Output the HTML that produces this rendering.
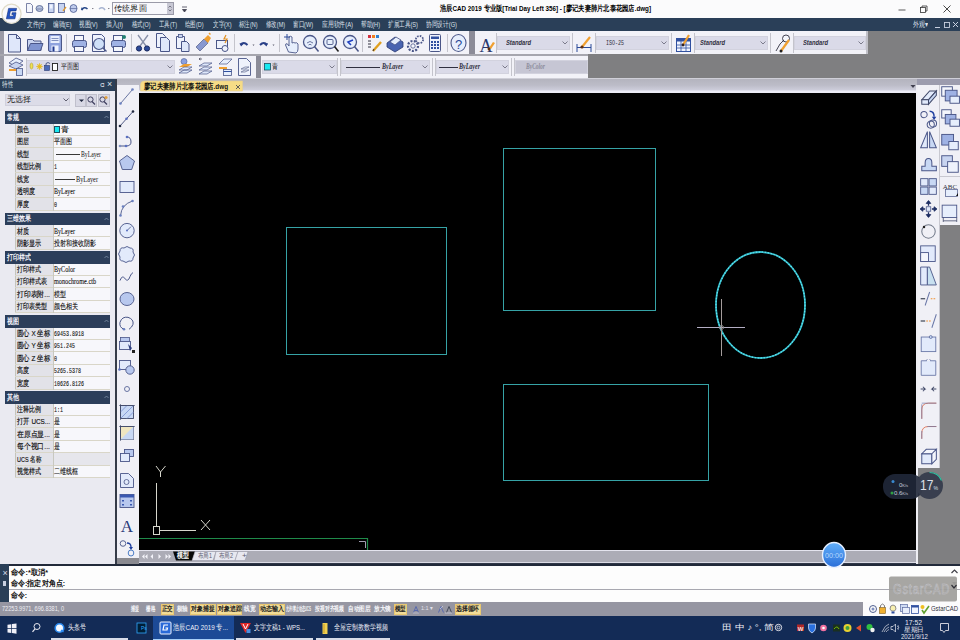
<!DOCTYPE html>
<html><head><meta charset="utf-8">
<style>
*{margin:0;padding:0;box-sizing:border-box}
html,body{width:960px;height:640px;overflow:hidden;background:#808080}
body{position:relative;font-family:"Liberation Sans",sans-serif;font-size:9px;color:#000}
.a{position:absolute}
.t{position:absolute;white-space:nowrap}
svg{position:absolute;overflow:visible}
.ln{display:inline-block;width:25px;height:1px;background:#333;vertical-align:3px;margin-right:1px}
</style><style id="fitcss">#doctab1{transform:scaleX(0.7908);transform-origin:0 0}#tabbar1{transform:scaleX(0.7500);transform-origin:0 0}#tabbar2{transform:scaleX(0.7818);transform-origin:0 0}#tabbar3{transform:scaleX(0.7818);transform-origin:0 0}#command1{transform:scaleX(0.9049);transform-origin:0 0}#command2{transform:scaleX(0.8805);transform-origin:0 0}#command3{transform:scaleX(0.8569);transform-origin:0 0}#status1{transform:scaleX(0.7963);transform-origin:0 0}#status2{transform:scaleX(0.5714);transform-origin:0 0}#status3{transform:scaleX(0.6429);transform-origin:0 0}#status4{transform:scaleX(0.7857);transform-origin:0 0}#status5{transform:scaleX(0.7857);transform-origin:0 0}#status6{transform:scaleX(0.8393);transform-origin:0 0}#status7{transform:scaleX(0.8500);transform-origin:0 0}#status8{transform:scaleX(0.8143);transform-origin:0 0}#status9{transform:scaleX(0.8571);transform-origin:0 0}#status10{transform:scaleX(0.4256);transform-origin:0 0}#status11{transform:scaleX(0.6905);transform-origin:0 0}#status12{transform:scaleX(0.8036);transform-origin:0 0}#status13{transform:scaleX(0.8095);transform-origin:0 0}#status14{transform:scaleX(0.7857);transform-origin:0 0}#status15{transform:scaleX(0.8321);transform-origin:0 0}#status16{transform:scaleX(0.9220);transform-origin:0 0}#status17{transform:scaleX(0.8462);transform-origin:0 0}#taskbar1{transform:scaleX(0.7500);transform-origin:0 0}#taskbar2{transform:scaleX(0.7878);transform-origin:0 0}#taskbar3{transform:scaleX(0.7450);transform-origin:0 0}#taskbar4{transform:scaleX(0.7500);transform-origin:0 0}#taskbar5{transform:scaleX(1.2290);transform-origin:0 0}#taskbar6{transform:scaleX(0.9697);transform-origin:0 0}#taskbar7{transform:scaleX(0.9524);transform-origin:0 0}#taskbar8{transform:scaleX(0.8666);transform-origin:0 0}#overlay1{transform:scaleX(0.8603);transform-origin:0 0}#overlay2{transform:scaleX(1.0267);transform-origin:0 0}#overlay3{transform:scaleX(0.7466);transform-origin:0 0}#panel1{transform:scaleX(0.6875);transform-origin:0 0}#panel2{transform:scaleX(0.7500);transform-origin:0 0}#panel3{transform:scaleX(0.7500);transform-origin:0 0}#panel4{transform:scaleX(0.7500);transform-origin:0 0}#panel5{transform:scaleX(0.7500);transform-origin:0 0}#panel6{transform:scaleX(0.7500);transform-origin:0 0}#panel7{transform:scaleX(0.7143);transform-origin:0 0}#panel8{transform:scaleX(0.7500);transform-origin:0 0}#panel9{transform:scaleX(0.6234);transform-origin:0 0}#panel10{transform:scaleX(0.7500);transform-origin:0 0}#panel11{transform:scaleX(0.7857);transform-origin:0 0}#panel12{transform:scaleX(0.7500);transform-origin:0 0}#panel13{transform:scaleX(0.7500);transform-origin:0 0}#panel14{transform:scaleX(0.7500);transform-origin:0 0}#panel15{transform:scaleX(0.6234);transform-origin:0 0}#panel16{transform:scaleX(0.7500);transform-origin:0 0}#panel17{transform:scaleX(0.7500);transform-origin:0 0}#panel18{transform:scaleX(0.7500);transform-origin:0 0}#panel19{transform:scaleX(0.7500);transform-origin:0 0}#panel20{transform:scaleX(0.7500);transform-origin:0 0}#panel21{transform:scaleX(0.7500);transform-origin:0 0}#panel22{transform:scaleX(0.7500);transform-origin:0 0}#panel23{transform:scaleX(0.7619);transform-origin:0 0}#panel24{transform:scaleX(0.7500);transform-origin:0 0}#panel25{transform:scaleX(0.7780);transform-origin:0 0}#panel26{transform:scaleX(0.8533);transform-origin:0 0}#panel27{transform:scaleX(0.7500);transform-origin:0 0}#panel28{transform:scaleX(0.7500);transform-origin:0 0}#panel29{transform:scaleX(0.7500);transform-origin:0 0}#panel30{transform:scaleX(0.7500);transform-origin:0 0}#panel31{transform:scaleX(0.7898);transform-origin:0 0}#panel32{transform:scaleX(0.6248);transform-origin:0 0}#panel33{transform:scaleX(0.7925);transform-origin:0 0}#panel34{transform:scaleX(0.6248);transform-origin:0 0}#panel35{transform:scaleX(0.7982);transform-origin:0 0}#panel36{transform:scaleX(0.6234);transform-origin:0 0}#panel37{transform:scaleX(0.7500);transform-origin:0 0}#panel38{transform:scaleX(0.6247);transform-origin:0 0}#panel39{transform:scaleX(0.7500);transform-origin:0 0}#panel40{transform:scaleX(0.6248);transform-origin:0 0}#panel41{transform:scaleX(0.7500);transform-origin:0 0}#panel42{transform:scaleX(0.7500);transform-origin:0 0}#panel43{transform:scaleX(0.6247);transform-origin:0 0}#panel44{transform:scaleX(0.7898);transform-origin:0 0}#panel45{transform:scaleX(0.7500);transform-origin:0 0}#panel46{transform:scaleX(0.8533);transform-origin:0 0}#panel47{transform:scaleX(0.7500);transform-origin:0 0}#panel48{transform:scaleX(0.8533);transform-origin:0 0}#panel49{transform:scaleX(0.7500);transform-origin:0 0}#panel50{transform:scaleX(0.6833);transform-origin:0 0}#panel52{transform:scaleX(0.7500);transform-origin:0 0}#panel53{transform:scaleX(0.7500);transform-origin:0 0}#toolbar11{transform:scaleX(0.7210);transform-origin:0 0}#toolbar12{transform:scaleX(0.6247);transform-origin:0 0}#toolbar13{transform:scaleX(0.7210);transform-origin:0 0}#toolbar14{transform:scaleX(0.7210);transform-origin:0 0}#toolbar21{transform:scaleX(0.7500);transform-origin:0 0}#toolbar22{transform:scaleX(0.7500);transform-origin:0 0}#toolbar23{transform:scaleX(0.7500);transform-origin:0 0}#toolbar24{transform:scaleX(0.7500);transform-origin:0 0}#toolbar25{transform:scaleX(0.6893);transform-origin:0 0}#title1{transform:scaleX(1.0312);transform-origin:0 0}#title2{transform:scaleX(0.7833);transform-origin:0 0}#menu1{transform:scaleX(0.7056);transform-origin:0 0}#menu2{transform:scaleX(0.6936);transform-origin:0 0}#menu3{transform:scaleX(0.6936);transform-origin:0 0}#menu4{transform:scaleX(0.7215);transform-origin:0 0}#menu5{transform:scaleX(0.6712);transform-origin:0 0}#menu6{transform:scaleX(0.6865);transform-origin:0 0}#menu7{transform:scaleX(0.6824);transform-origin:0 0}#menu8{transform:scaleX(0.6936);transform-origin:0 0}#menu9{transform:scaleX(0.6824);transform-origin:0 0}#menu10{transform:scaleX(0.6786);transform-origin:0 0}#menu11{transform:scaleX(0.6923);transform-origin:0 0}#menu12{transform:scaleX(0.7265);transform-origin:0 0}#menu13{transform:scaleX(0.7009);transform-origin:0 0}#menu14{transform:scaleX(0.7030);transform-origin:0 0}#menu15{transform:scaleX(0.7116);transform-origin:0 0}#menu16{transform:scaleX(0.7500);transform-origin:0 0}</style></head>
<body>
<div class="a" style="left:0px;top:0px;width:960px;height:18px;background:#fbfbfc;"></div>
<svg class="a" style="left:0;top:0" width="200" height="18" viewBox="0 0 200 18">
<path d="M26.5 3.5 h4 l2 2 v7 h-6z" fill="#f4f6fc" stroke="#5a6490" stroke-width="0.8"/>
<ellipse cx="39.5" cy="8.5" rx="3.5" ry="3" fill="#b8c4e0" stroke="#50608a" stroke-width="0.8"/><path d="M36.5 9 h6" stroke="#50608a" stroke-width="0.6"/>
<rect x="48.5" y="3.5" width="5.5" height="9" fill="#c8d4f0" stroke="#4a5a90" stroke-width="0.8"/><rect x="50" y="4.5" width="2.5" height="4" fill="#f0f4ff"/>
<rect x="58.5" y="3.5" width="6" height="9" fill="#c8d4f0" stroke="#4a5a90" stroke-width="0.8"/><path d="M63 11 l3 -4" stroke="#e09a30" stroke-width="1.3"/>
<ellipse cx="73.5" cy="8.5" rx="3.5" ry="4" fill="#c0ccec" stroke="#4a5a90" stroke-width="0.8"/><path d="M70 8.5 h7" stroke="#4a5a90" stroke-width="0.6"/>
<path d="M81.5 10 q2.5 -4 6 -1" fill="none" stroke="#2a4a8a" stroke-width="1.6"/><path d="M81 7.5 l1 3 l2 -2z" fill="#2a4a8a"/>
<path d="M92 8 h1.6 l-0.8 1.2z" fill="#505060"/>
<path d="M105 10 q-2.5 -4 -6 -1" fill="none" stroke="#a8b4d0" stroke-width="1.6"/>
<path d="M108 8 h1.6 l-0.8 1.2z" fill="#505060"/>
</svg>
<div class="a" style="left:112px;top:2px;width:62px;height:13px;background:#f8f8fc;border:1px solid #9a9aa8"></div>
<div class="t" id="title1" style="left:114px;top:3.5px;font-size:8px;line-height:10px;color:#101010;">传统界面</div>
<div class="a" style="left:167px;top:3px;width:6px;height:11px;background:#c8c8d4;"></div>
<svg class="a" style="left:167px;top:3px" width="6" height="11"><path d="M1.5 4.5 l1.5 -1.5 l1.5 1.5 M1.5 6.5 l1.5 1.5 l1.5 -1.5" fill="none" stroke="#606070" stroke-width="0.8"/></svg>
<svg class="a" style="left:181px;top:6px" width="8" height="8"><path d="M1 1 h5 M1.5 3.5 l2 2.5 l2 -2.5z" fill="#404050" stroke="#404050" stroke-width="0.8"/></svg>
<div class="t" id="title2" style="left:440px;top:4px;font-size:8px;line-height:10px;color:#000;"><b>浩辰CAD 2019 专业版[Trial Day Left 356] - [廖记夫妻肺片北泰花园店.dwg]</b></div>
<svg class="a" style="left:895px;top:2px" width="65" height="14">
<line x1="3.5" y1="8" x2="10.5" y2="8" stroke="#333" stroke-width="0.8"/>
<rect x="25.5" y="5.5" width="5" height="5" fill="none" stroke="#333" stroke-width="0.8"/><path d="M27 5.5 v-1.5 h5 v5 h-1.5" fill="none" stroke="#333" stroke-width="0.8"/>
<path d="M48.5 3.5 l7 7 M55.5 3.5 l-7 7" stroke="#333" stroke-width="0.9"/>
</svg>
<div class="a" style="left:0px;top:18px;width:960px;height:13px;background:#2a3f58;"></div>
<div class="t" id="menu1" style="left:26.7px;top:19.5px;font-size:8px;line-height:10px;color:#dde0ea;">文件(F)</div>
<div class="t" id="menu2" style="left:52.5px;top:19.5px;font-size:8px;line-height:10px;color:#dde0ea;">编辑(E)</div>
<div class="t" id="menu3" style="left:79px;top:19.5px;font-size:8px;line-height:10px;color:#dde0ea;">视图(V)</div>
<div class="t" id="menu4" style="left:106px;top:19.5px;font-size:8px;line-height:10px;color:#dde0ea;">插入(I)</div>
<div class="t" id="menu5" style="left:131.7px;top:19.5px;font-size:8px;line-height:10px;color:#dde0ea;">格式(O)</div>
<div class="t" id="menu6" style="left:159px;top:19.5px;font-size:8px;line-height:10px;color:#dde0ea;">工具(T)</div>
<div class="t" id="menu7" style="left:185px;top:19.5px;font-size:8px;line-height:10px;color:#dde0ea;">绘图(D)</div>
<div class="t" id="menu8" style="left:212.5px;top:19.5px;font-size:8px;line-height:10px;color:#dde0ea;">文字(X)</div>
<div class="t" id="menu9" style="left:239px;top:19.5px;font-size:8px;line-height:10px;color:#dde0ea;">标注(N)</div>
<div class="t" id="menu10" style="left:266px;top:19.5px;font-size:8px;line-height:10px;color:#dde0ea;">修改(M)</div>
<div class="t" id="menu11" style="left:293px;top:19.5px;font-size:8px;line-height:10px;color:#dde0ea;">窗口(W)</div>
<div class="t" id="menu12" style="left:321.7px;top:19.5px;font-size:8px;line-height:10px;color:#dde0ea;">应用软件(A)</div>
<div class="t" id="menu13" style="left:360.7px;top:19.5px;font-size:8px;line-height:10px;color:#dde0ea;">帮助(H)</div>
<div class="t" id="menu14" style="left:388px;top:19.5px;font-size:8px;line-height:10px;color:#dde0ea;">扩展工具(S)</div>
<div class="t" id="menu15" style="left:426px;top:19.5px;font-size:8px;line-height:10px;color:#dde0ea;">协同设计(G)</div>
<div class="t" id="menu16" style="left:913px;top:19.5px;font-size:8px;line-height:10px;color:#dde0ea;">外观▾</div>
<svg class="a" style="left:930px;top:19px" width="30" height="12">
<line x1="5" y1="8.5" x2="10" y2="8.5" stroke="#c8d0e0" stroke-width="1"/>
<rect x="14.5" y="3.5" width="5" height="5" fill="none" stroke="#c8d0e0" stroke-width="0.9"/>
<path d="M23 3 l5 5 M28 3 l-5 5" stroke="#c8d0e0" stroke-width="1"/>
</svg>
<svg class="a" style="left:0;top:0" width="30" height="30" viewBox="0 0 30 30">
<circle cx="11.5" cy="13.8" r="9.6" fill="#f8f8fc" stroke="#e0dcc8" stroke-width="1.2"/>
<path d="M8.6 8.4 H16.6 L16 10.9 H10.4 L9.3 16.2 H13.2 L13.6 14.5 H11.8 L12.2 12.7 H16 L14.9 18.8 H6.4 Z" fill="#2456c8" stroke="#0e2a78" stroke-width="0.6" stroke-linejoin="round"/>
</svg>
<div class="a" style="left:0px;top:31px;width:868px;height:23px;background:#f2f2f8;"></div>
<div class="a" style="left:868px;top:31px;width:92px;height:47px;background:#7f7f81;"></div>
<div class="a" style="left:0px;top:54px;width:868px;height:2px;background:#a6a6ae;"></div>
<div class="a" style="left:0px;top:56px;width:588px;height:22px;background:#f2f2f8;"></div>
<div class="a" style="left:588px;top:54px;width:280px;height:24px;background:#7f7f81;"></div>
<div class="a" style="left:0px;top:78px;width:960px;height:1px;background:#cfcfd8;"></div>
<div class="a" style="left:0px;top:31px;width:4px;height:23px;background:#9a9aa6;"></div>
<svg class="a" style="left:0px;top:0px;" width="960" height="80" viewBox="0 0 960 80">
<!-- new -->
<path d="M8.5 34.5 h8 l4 4 v13.5 h-12z" fill="#dfe7fa" stroke="#4a5688" stroke-width="1"/><path d="M16.5 34.5 v4 h4" fill="none" stroke="#4a5688" stroke-width="1"/>
<!-- open -->
<path d="M27.5 39.5 h5 l1.5 1.5 h7 v9.5 h-13.5z" fill="#c9d4f0" stroke="#4a5688" stroke-width="1"/><path d="M27.5 50.5 l3 -7 h12.5 l-2.5 7z" fill="#7f94d0" stroke="#4a5688" stroke-width="1"/>
<!-- save -->
<rect x="48.5" y="34.5" width="13" height="17" rx="1.5" fill="#8fa3de" stroke="#4a5688" stroke-width="1"/><rect x="50.5" y="36" width="9" height="7" fill="#e8eefc"/><line x1="51.5" y1="38.5" x2="58.5" y2="38.5" stroke="#8090c0"/><line x1="51.5" y1="40.5" x2="58.5" y2="40.5" stroke="#8090c0"/><rect x="51.5" y="45.5" width="7" height="6" fill="#f0f4ff"/><rect x="52.5" y="46.5" width="2" height="5" fill="#203a90"/>
<!-- print -->
<rect x="74.5" y="35.5" width="9" height="5" fill="#f4f6fc" stroke="#4a5688"/><rect x="72.5" y="40.5" width="14" height="7" rx="2" fill="#9fb2e4" stroke="#4a5688"/><rect x="74.5" y="46.5" width="9" height="5" fill="#f4f6fc" stroke="#4a5688"/>
<!-- preview -->
<path d="M92.5 34.5 h9 l3 3 v14 h-12z" fill="#eef2fc" stroke="#4a5688"/><circle cx="99" cy="44" r="5.5" fill="#cfe0f8" stroke="#4a5688" stroke-width="1.2"/><line x1="103" y1="48" x2="106.5" y2="51.5" stroke="#4a5688" stroke-width="1.4"/>
<!-- plot -->
<rect x="113.5" y="35.5" width="9" height="5" fill="#f4f6fc" stroke="#4a5688"/><rect x="111.5" y="40.5" width="14" height="7" rx="2" fill="#9fb2e4" stroke="#4a5688"/><rect x="113.5" y="46.5" width="9" height="5" fill="#f4f6fc" stroke="#4a5688"/><circle cx="124" cy="37" r="2" fill="#208070"/>
<!-- cut -->
<path d="M138 35 l8 11 M148 35 l-8 11" stroke="#8890a8" stroke-width="1.3"/><circle cx="139" cy="48.5" r="2.6" fill="#2c4a98" stroke="#1a2a60"/><circle cx="147" cy="48.5" r="2.6" fill="#2c4a98" stroke="#1a2a60"/>
<!-- copy -->
<path d="M156.5 33.5 h6 l3 3 v11 h-9z" fill="#eef2fc" stroke="#4a5688"/><path d="M160.5 37.5 h6 l3 3 v11 h-9z" fill="#dfe8fa" stroke="#4a5688"/>
<!-- paste -->
<path d="M176.5 36.5 h8 v12 h-8z" fill="#eef2fc" stroke="#4a5688"/><rect x="178.5" y="34.5" width="4" height="3" fill="#c8d4f0" stroke="#4a5688" stroke-width="0.8"/><path d="M181.5 41.5 h5 l2.5 2.5 v7.5 h-7.5z" fill="#dfe8fa" stroke="#4a5688"/>
<!-- matchprop -->
<path d="M196 47 l8 -8 l4 4 l-8 8z" fill="#8898d0" stroke="#606a90" stroke-width="0.8"/><path d="M204 39 l4 -4 l3 3 l-3 5z" fill="#f0a030"/><path d="M209 33 l1.5 1.5" stroke="#f0a030" stroke-width="1.5"/>
<!-- block -->
<rect x="216.5" y="40.5" width="11" height="8" fill="#eef2fc" stroke="#4a5688"/><circle cx="225" cy="48.5" r="3" fill="#eef2fc" stroke="#4a5688"/><path d="M226 35 l-2 4 h3 l-2 4" fill="none" stroke="#e09020" stroke-width="1.2"/>
<!-- undo/redo -->
<path d="M240.5 45 q3 -4 7 0" fill="none" stroke="#2a4088" stroke-width="2"/><path d="M239.5 43 l1.5 3.5 l2.5 -2.5z" fill="#2a4088"/><path d="M252.5 44.5 h2 l-1 1.5z" fill="#606070"/>
<path d="M267 45 q-3 -4 -7 0" fill="none" stroke="#2a4088" stroke-width="2"/><path d="M268 43 l-1.5 3.5 l-2.5 -2.5z" fill="#2a4088"/><path d="M272.5 44.5 h2 l-1 1.5z" fill="#606070"/>
<!-- pan hand -->
<path d="M288.5 52 l-3 -7 q0 -2 2 -1 l1.5 2 v-9 q1.5 -1.5 3 0 v6 q2 -1 3 0 q2 -1 3 1 v5 q0 3 -2 4z" fill="#e6eefc" stroke="#4a5688" stroke-width="0.9"/><path d="M284 37 h6 M287 34 v6" stroke="#2c4a98" stroke-width="1"/>
<!-- zoom realtime -->
<circle cx="310" cy="42" r="6.5" fill="#e6eefc" stroke="#4a5688" stroke-width="1.3"/><path d="M307 43 q3 -3 6 0 M308.5 45 q1.5 -1.5 3 0" fill="none" stroke="#4a5688" stroke-width="0.8"/><line x1="314.5" y1="46.5" x2="318.5" y2="51.5" stroke="#4a5688" stroke-width="1.5"/>
<!-- zoom window -->
<circle cx="330" cy="42" r="6.5" fill="#e6eefc" stroke="#4a5688" stroke-width="1.3"/><rect x="327" y="39.5" width="6" height="5" rx="1" fill="none" stroke="#4a5688" stroke-width="0.9"/><line x1="334.5" y1="46.5" x2="338.5" y2="51.5" stroke="#202020" stroke-width="1.6"/>
<!-- zoom prev -->
<circle cx="350" cy="42" r="6.5" fill="#e6eefc" stroke="#4a5688" stroke-width="1.3"/><path d="M353 40 l-5 2 l3 3" fill="none" stroke="#2040c0" stroke-width="1.6"/><line x1="354.5" y1="46.5" x2="358.5" y2="51.5" stroke="#4a5688" stroke-width="1.5"/>
<!-- properties -->
<rect x="368" y="35" width="3" height="3" fill="#d03040"/><rect x="372" y="35" width="3" height="3" fill="#f08020"/><rect x="376" y="35" width="3" height="3" fill="#3080d0"/>
<path d="M368 41 h3 M368 44 h3 M368 47 h3" stroke="#303040" stroke-width="1"/><path d="M373 51 l8 -9" stroke="#e0a020" stroke-width="2.4"/><path d="M373 51 l1 -2" stroke="#303040" stroke-width="1"/>
<!-- design center -->
<path d="M387 43 l8 -6 l8 5 v5 l-8 5 l-8 -5z" fill="#4a64b0" stroke="#2a3a70" stroke-width="0.8"/><path d="M390 42 l6 -5 l5 3 l-6 5z" fill="#e6eefc" stroke="#4a5688" stroke-width="0.8"/>
<!-- gear -->
<circle cx="413" cy="46" r="5" fill="none" stroke="#4a5688" stroke-width="2.2" stroke-dasharray="2 1.4"/><circle cx="413" cy="46" r="2.2" fill="#f4f6fc" stroke="#4a5688" stroke-width="0.8"/><circle cx="419.5" cy="39.5" r="3.6" fill="none" stroke="#4a5688" stroke-width="1.8" stroke-dasharray="1.6 1.2"/>
<!-- calc -->
<rect x="429.5" y="34.5" width="11" height="17" rx="1" fill="#eef2fc" stroke="#4a5688"/><rect x="431" y="36.5" width="8" height="2.5" fill="#3050a0"/>
<g fill="#3050a0"><rect x="431" y="41" width="2" height="2"/><rect x="434" y="41" width="2" height="2"/><rect x="437" y="41" width="2" height="2"/><rect x="431" y="44" width="2" height="2"/><rect x="434" y="44" width="2" height="2"/><rect x="437" y="44" width="2" height="2"/><rect x="431" y="47" width="2" height="2"/><rect x="434" y="47" width="2" height="2"/><rect x="437" y="47" width="2" height="2"/></g>
<!-- help -->
<ellipse cx="458.5" cy="43" rx="7.5" ry="8.5" fill="#e6eefc" stroke="#4a5688" stroke-width="1.1"/><text x="458.5" y="48.5" text-anchor="middle" font-family="Liberation Sans" font-size="13" fill="#2a4a98">?</text>
<!-- text style A -->
<text x="486" y="52" text-anchor="middle" font-family="Liberation Serif" font-size="18" fill="#2a3a70">A</text><path d="M489 48 l4 -6 l2 1 l-4 6z" fill="#f0a030"/><circle cx="489" cy="49" r="1.4" fill="#603010"/>
<!-- dim style -->
<path d="M577 47.5 h14" stroke="#2a4a98" stroke-width="1"/><path d="M577 44 v8 M591 44 v8" stroke="#2a4a98"/><path d="M582 47 l8 -10" stroke="#f0a030" stroke-width="2.2"/><circle cx="582" cy="47" r="1.6" fill="#603010"/>
<!-- table style -->
<rect x="676.5" y="38.5" width="14" height="13" fill="#f0f4ff" stroke="#3050a0"/><rect x="676.5" y="38.5" width="14" height="3" fill="#3050a0"/><path d="M676.5 45 h14 M676.5 48 h14 M681 41 v10 M686 41 v10" stroke="#3050a0" stroke-width="0.8"/><path d="M683 45 l6 -10" stroke="#f0a030" stroke-width="2.2"/><circle cx="683" cy="45" r="1.4" fill="#302020"/>
<!-- mleader -->
<circle cx="786" cy="38.5" r="3.5" fill="#f4f6fc" stroke="#303040" stroke-width="0.9"/><path d="M776 51 l4 -7 l4 -4" fill="none" stroke="#303040" stroke-width="0.9"/><path d="M781 51 l8 -11" stroke="#f0a030" stroke-width="2.2"/><circle cx="781" cy="51" r="1.5" fill="#202020"/>
</svg>
<div class="a" style="left:66px;top:34px;width:1px;height:18px;background:#c4c4cc;"></div>
<div class="a" style="left:130.5px;top:34px;width:1px;height:18px;background:#c4c4cc;"></div>
<div class="a" style="left:234px;top:34px;width:1px;height:18px;background:#c4c4cc;"></div>
<div class="a" style="left:278.5px;top:34px;width:1px;height:18px;background:#c4c4cc;"></div>
<div class="a" style="left:362px;top:34px;width:1px;height:18px;background:#c4c4cc;"></div>
<div class="a" style="left:446.5px;top:34px;width:1px;height:18px;background:#c4c4cc;"></div>
<div class="a" style="left:469px;top:31px;width:6px;height:23px;background:#8c8c98;"></div>
<div class="a" style="left:496px;top:33px;width:1px;height:20px;background:#c4c4cc;"></div>
<div class="a" style="left:572px;top:33px;width:1px;height:20px;background:#c4c4cc;"></div>
<div class="a" style="left:595px;top:33px;width:1px;height:20px;background:#c4c4cc;"></div>
<div class="a" style="left:670.5px;top:33px;width:1px;height:20px;background:#c4c4cc;"></div>
<div class="a" style="left:693.5px;top:33px;width:1px;height:20px;background:#c4c4cc;"></div>
<div class="a" style="left:770px;top:33px;width:1px;height:20px;background:#c4c4cc;"></div>
<div class="a" style="left:793px;top:33px;width:1px;height:20px;background:#c4c4cc;"></div>
<div class="a" style="left:497px;top:36px;width:73px;height:14px;background:#dadae8;border:1px solid #d2d2de"></div>
<div class="t" id="toolbar11" style="left:506px;top:38.0px;font-size:8px;line-height:10px;color:#303040;font-family:'Liberation Sans',sans-serif;font-weight:bold;font-style:italic;">Standard</div>
<svg class="a" style="left:562px;top:41.0px" width="6" height="4"><polyline points="0.5,0.5 3,3 5.5,0.5" fill="none" stroke="#707080" stroke-width="0.9"/></svg>
<div class="a" style="left:596px;top:36px;width:73px;height:14px;background:#dadae8;border:1px solid #d2d2de"></div>
<div class="t" id="toolbar12" style="left:606px;top:38.0px;font-size:8px;line-height:10px;color:#303040;font-family:'Liberation Mono',monospace;">ISO-25</div>
<svg class="a" style="left:661px;top:41.0px" width="6" height="4"><polyline points="0.5,0.5 3,3 5.5,0.5" fill="none" stroke="#707080" stroke-width="0.9"/></svg>
<div class="a" style="left:695px;top:36px;width:73px;height:14px;background:#dadae8;border:1px solid #d2d2de"></div>
<div class="t" id="toolbar13" style="left:700px;top:38.0px;font-size:8px;line-height:10px;color:#303040;font-family:'Liberation Sans',sans-serif;font-weight:bold;font-style:italic;">Standard</div>
<svg class="a" style="left:760px;top:41.0px" width="6" height="4"><polyline points="0.5,0.5 3,3 5.5,0.5" fill="none" stroke="#707080" stroke-width="0.9"/></svg>
<div class="a" style="left:794px;top:36px;width:72px;height:14px;background:#dadae8;border:1px solid #d2d2de"></div>
<div class="t" id="toolbar14" style="left:803px;top:38.0px;font-size:8px;line-height:10px;color:#303040;font-family:'Liberation Sans',sans-serif;font-weight:bold;font-style:italic;">Standard</div>
<svg class="a" style="left:858px;top:41.0px" width="6" height="4"><polyline points="0.5,0.5 3,3 5.5,0.5" fill="none" stroke="#707080" stroke-width="0.9"/></svg>
<div class="a" style="left:866px;top:31px;width:2px;height:23px;background:#c0c0c8;"></div>
<div class="a" style="left:0px;top:56px;width:4px;height:22px;background:#9a9aa6;"></div>
<div class="a" style="left:26px;top:60px;width:149px;height:14px;background:#dadae8;border:1px solid #d2d2de"></div>
<div class="t" id="toolbar21" style="left:61px;top:62px;font-size:8px;line-height:10px;color:#202020;">平面图</div>
<svg class="a" style="left:167px;top:65px" width="6" height="4"><polyline points="0.5,0.5 3,3 5.5,0.5" fill="none" stroke="#707080" stroke-width="0.9"/></svg>
<div class="a" style="left:255.5px;top:56px;width:5px;height:22px;background:#8c8c98;"></div>
<div class="a" style="left:261.5px;top:60px;width:75px;height:14px;background:#dadae8;border:1px solid #d2d2de"></div>
<div class="t" id="toolbar22" style="left:272px;top:62px;font-size:8px;line-height:10px;color:#202020;">青</div>
<svg class="a" style="left:328.5px;top:65px" width="6" height="4"><polyline points="0.5,0.5 3,3 5.5,0.5" fill="none" stroke="#707080" stroke-width="0.9"/></svg>
<div class="a" style="left:341px;top:60px;width:89px;height:14px;background:#dadae8;border:1px solid #d2d2de"></div>
<div class="t" id="toolbar23" style="left:381.5px;top:62px;font-size:8px;line-height:10px;color:#303040;font-family:'Liberation Serif',serif;font-weight:bold;font-style:italic">ByLayer</div>
<svg class="a" style="left:422px;top:65px" width="6" height="4"><polyline points="0.5,0.5 3,3 5.5,0.5" fill="none" stroke="#707080" stroke-width="0.9"/></svg>
<div class="a" style="left:436px;top:60px;width:73px;height:14px;background:#dadae8;border:1px solid #d2d2de"></div>
<div class="t" id="toolbar24" style="left:459px;top:62px;font-size:8px;line-height:10px;color:#303040;font-family:'Liberation Serif',serif;font-weight:bold;font-style:italic">ByLayer</div>
<svg class="a" style="left:501.5px;top:65px" width="6" height="4"><polyline points="0.5,0.5 3,3 5.5,0.5" fill="none" stroke="#707080" stroke-width="0.9"/></svg>
<div class="a" style="left:514.5px;top:60px;width:73px;height:14px;background:#c6c6d4;border:1px solid #d2d2de"></div>
<div class="t" id="toolbar25" style="left:526px;top:62px;font-size:8px;line-height:10px;color:#8c8c9c;font-family:'Liberation Serif',serif;font-weight:bold;font-style:italic">ByColor</div>
<div class="a" style="left:25.5px;top:58px;width:1px;height:18px;background:#c4c4cc;"></div>
<div class="a" style="left:337px;top:58px;width:1px;height:18px;background:#c4c4cc;"></div>
<div class="a" style="left:340px;top:58px;width:1px;height:18px;background:#c4c4cc;"></div>
<div class="a" style="left:432px;top:58px;width:1px;height:18px;background:#c4c4cc;"></div>
<div class="a" style="left:435px;top:58px;width:1px;height:18px;background:#c4c4cc;"></div>
<div class="a" style="left:511px;top:58px;width:1px;height:18px;background:#c4c4cc;"></div>
<div class="a" style="left:513.5px;top:58px;width:1px;height:18px;background:#c4c4cc;"></div>
<svg class="a" style="left:0px;top:0px;" width="600" height="80" viewBox="0 0 600 80">
<!-- layer manager -->
<path d="M9 63 l7 -5 l7 3 l-7 5z" fill="#e6eefc" stroke="#4a5688" stroke-width="0.8"/><path d="M9 66 l7 -4 l7 3 l-7 4z" fill="#c8d4f0" stroke="#4a5688" stroke-width="0.8"/><path d="M9 70 h10" stroke="#f0a030" stroke-width="2"/><rect x="16.5" y="68.5" width="6" height="7" fill="#c8d8f4" stroke="#4a5688" stroke-width="0.8"/>
<!-- layer icons in dropdown -->
<ellipse cx="31.5" cy="66" rx="1.5" ry="3" fill="#f0e050" stroke="#a09030" stroke-width="0.5"/>
<circle cx="39.5" cy="66.5" r="2.2" fill="#f0d030"/><path d="M36 66.5 h7 M39.5 63 v7 M37 64 l5 5 M42 64 l-5 5" stroke="#e0b020" stroke-width="0.6"/>
<rect x="44.5" y="65.5" width="5" height="5" fill="#4a6ab8" stroke="#2a3a70" stroke-width="0.6"/><path d="M46 65.5 v-2 q2 -2 4 0" fill="none" stroke="#2a3a70" stroke-width="0.8"/>
<rect x="52.5" y="63.5" width="5" height="7" fill="#fff" stroke="#202020" stroke-width="0.9"/>
<!-- layer icons after dropdown -->
<circle cx="184" cy="61.5" r="3" fill="#8aa0e0" stroke="#4a5a90" stroke-width="0.6"/><path d="M179 67 l5 -3 l8 0 l-5 3z" fill="#f0a030"/><path d="M179 70 l5 -3 h8 l-5 3z M179 73 l5 -3 h8 l-5 3z" fill="#dfe8fa" stroke="#4a5688" stroke-width="0.7"/>
<path d="M199 66 l5 -3 h8 l-5 3z M199 70 l5 -3 h8 l-5 3z M199 74 l5 -3 h8 l-5 3z" fill="#dfe8fa" stroke="#4a5688" stroke-width="0.7"/><path d="M199 59 h3 M199 59 l1.5 -1 M199 59 l1.5 1" stroke="#404050" stroke-width="0.7"/>
<path d="M219 64 l5 -5 h8 l-5 5z" fill="#e6eefc" stroke="#4a5688" stroke-width="0.7"/><path d="M219 68 h8" stroke="#f0a030" stroke-width="2"/><rect x="223.5" y="69.5" width="8" height="6" fill="#e6eefc" stroke="#4a5688" stroke-width="0.8"/><path d="M223.5 71.5 h8" stroke="#3050a0" stroke-width="1"/>
<path d="M238.5 58.5 h8 l4 4 v13 h-12z" fill="#eef2fc" stroke="#4a5688" stroke-width="0.9"/><path d="M241 69 l4 -2 h4 l-4 2z M241 72 l4 -2 h4 l-4 2z" fill="none" stroke="#606a90" stroke-width="0.7"/>
<!-- color swatch -->
<rect x="264.5" y="63.5" width="6" height="6.5" fill="#18e8f0" stroke="#1a5060" stroke-width="0.8"/>
<!-- linetype lines -->
<line x1="346" y1="67.5" x2="380" y2="67.5" stroke="#303040" stroke-width="1"/>
<line x1="439" y1="67.5" x2="458" y2="67.5" stroke="#303040" stroke-width="1"/>
</svg>
<div class="a" style="left:0px;top:79px;width:115px;height:485px;background:#eaeaf1;"></div>
<div class="a" style="left:0px;top:79px;width:115px;height:12px;background:#2a3f58;"></div>
<div class="t" id="panel1" style="left:2px;top:80px;font-size:8px;line-height:10px;color:#dfe2ea;">特性</div>
<div class="t" style="left:99.5px;top:80.5px;font-size:6px;line-height:8px;color:#c8ccd8;">ᗡ</div>
<div class="t" style="left:107px;top:79px;font-size:9px;line-height:11px;color:#dfe2ea;">×</div>
<div class="a" style="left:5px;top:94px;width:65px;height:12px;background:#dcdce8;border:1px solid #d0d0dc"></div>
<div class="t" style="left:7px;top:95px;font-size:8px;line-height:10px;color:#202020;">无选择</div>
<svg class="a" style="left:63px;top:98px" width="6" height="4"><polyline points="0.5,0.5 3,3 5.5,0.5" fill="none" stroke="#606070" stroke-width="1"/></svg>
<div class="a" style="left:75px;top:94px;width:11px;height:13px;background:#d8d8e4;border:1px solid #c0c0cc"></div>
<div class="a" style="left:86px;top:94px;width:11px;height:13px;background:#d8d8e4;border:1px solid #c0c0cc"></div>
<div class="a" style="left:98px;top:94px;width:12px;height:13px;background:#d8d8e4;border:1px solid #c0c0cc"></div>
<svg class="a" style="left:75px;top:94px" width="36" height="13"><path d="M4 5.5 L6.5 8 L9 5.5 Z" fill="#202840"/><circle cx="15.5" cy="5.5" r="2.6" fill="none" stroke="#404060" stroke-width="1"/><line x1="17" y1="7.5" x2="20" y2="10.5" stroke="#404060" stroke-width="1.2"/><circle cx="27.5" cy="5.5" r="2.6" fill="none" stroke="#404060" stroke-width="1"/><line x1="29" y1="7.5" x2="32" y2="10.5" stroke="#404060" stroke-width="1.2"/><circle cx="31" cy="3.5" r="1.6" fill="#e0a040"/></svg>
<div class="a" style="left:5px;top:111px;width:105px;height:12.5px;background:#2c3e5a;"></div>
<div class="t" id="panel2" style="left:7px;top:112.5px;font-size:8px;line-height:10px;color:#f0f0f8;font-weight:bold">常规</div>
<svg class="a" style="left:104px;top:115px" width="5" height="4"><polyline points="0.5,3 2.5,1 4.5,3" fill="none" stroke="#8090a8" stroke-width="0.8"/></svg>
<div class="a" style="left:15px;top:123.5px;width:37.5px;height:12.45px;background:#e2e2e8;"></div>
<div class="a" style="left:15px;top:123.5px;width:0.8px;height:12.45px;background:#c4c4bc;"></div>
<div class="a" style="left:53px;top:123.5px;width:57px;height:12.45px;background:#f7f7fb;"></div>
<div class="a" style="left:15px;top:134.95px;width:95px;height:1px;background:#d9d6c8;"></div>
<div class="a" style="left:52.5px;top:123.5px;width:0.8px;height:12.45px;background:#c8c8c0;"></div>
<div class="t" id="panel3" style="left:16.5px;top:125.0px;font-size:8px;line-height:10px;color:#101010;-webkit-text-stroke:0.15px #000;">颜色</div>
<div class="t" style="left:54px;top:125.0px;font-size:8px;line-height:10px;color:#101010;font-family:'Liberation Mono',monospace;-webkit-text-stroke:0.1px #000;"><span style="display:inline-block;width:6px;height:7px;background:#18e8f0;border:1px solid #205060;vertical-align:-1px;margin-right:1px"></span>青</div>
<div class="a" style="left:15px;top:135.95px;width:37.5px;height:12.45px;background:#e2e2e8;"></div>
<div class="a" style="left:15px;top:135.95px;width:0.8px;height:12.45px;background:#c4c4bc;"></div>
<div class="a" style="left:53px;top:135.95px;width:57px;height:12.45px;background:#f7f7fb;"></div>
<div class="a" style="left:15px;top:147.39999999999998px;width:95px;height:1px;background:#d9d6c8;"></div>
<div class="a" style="left:52.5px;top:135.95px;width:0.8px;height:12.45px;background:#c8c8c0;"></div>
<div class="t" id="panel4" style="left:16.5px;top:137.45px;font-size:8px;line-height:10px;color:#101010;-webkit-text-stroke:0.15px #000;">图层</div>
<div class="t" id="panel5" style="left:54px;top:137.45px;font-size:8px;line-height:10px;color:#101010;-webkit-text-stroke:0.1px #000;">平面图</div>
<div class="a" style="left:15px;top:148.39999999999998px;width:37.5px;height:12.45px;background:#e2e2e8;"></div>
<div class="a" style="left:15px;top:148.39999999999998px;width:0.8px;height:12.45px;background:#c4c4bc;"></div>
<div class="a" style="left:53px;top:148.39999999999998px;width:57px;height:12.45px;background:#f7f7fb;"></div>
<div class="a" style="left:15px;top:159.84999999999997px;width:95px;height:1px;background:#d9d6c8;"></div>
<div class="a" style="left:52.5px;top:148.39999999999998px;width:0.8px;height:12.45px;background:#c8c8c0;"></div>
<div class="t" id="panel6" style="left:16.5px;top:149.89999999999998px;font-size:8px;line-height:10px;color:#101010;-webkit-text-stroke:0.15px #000;">线型</div>
<div class="a" style="left:56px;top:154.39999999999998px;width:24px;height:0.8px;background:#383838;"></div>
<div class="t" id="panel7" style="left:81px;top:149.89999999999998px;font-size:8px;line-height:10px;color:#101010;font-family:'Liberation Serif',serif;">ByLayer</div>
<div class="a" style="left:15px;top:160.84999999999997px;width:37.5px;height:12.45px;background:#e2e2e8;"></div>
<div class="a" style="left:15px;top:160.84999999999997px;width:0.8px;height:12.45px;background:#c4c4bc;"></div>
<div class="a" style="left:53px;top:160.84999999999997px;width:57px;height:12.45px;background:#f7f7fb;"></div>
<div class="a" style="left:15px;top:172.29999999999995px;width:95px;height:1px;background:#d9d6c8;"></div>
<div class="a" style="left:52.5px;top:160.84999999999997px;width:0.8px;height:12.45px;background:#c8c8c0;"></div>
<div class="t" id="panel8" style="left:16.5px;top:162.34999999999997px;font-size:8px;line-height:10px;color:#101010;-webkit-text-stroke:0.15px #000;">线型比例</div>
<div class="t" id="panel9" style="left:54px;top:162.34999999999997px;font-size:8px;line-height:10px;color:#101010;font-family:'Liberation Mono',monospace;-webkit-text-stroke:0.1px #000;">1</div>
<div class="a" style="left:15px;top:173.29999999999995px;width:37.5px;height:12.45px;background:#e2e2e8;"></div>
<div class="a" style="left:15px;top:173.29999999999995px;width:0.8px;height:12.45px;background:#c4c4bc;"></div>
<div class="a" style="left:53px;top:173.29999999999995px;width:57px;height:12.45px;background:#f7f7fb;"></div>
<div class="a" style="left:15px;top:184.74999999999994px;width:95px;height:1px;background:#d9d6c8;"></div>
<div class="a" style="left:52.5px;top:173.29999999999995px;width:0.8px;height:12.45px;background:#c8c8c0;"></div>
<div class="t" id="panel10" style="left:16.5px;top:174.79999999999995px;font-size:8px;line-height:10px;color:#101010;-webkit-text-stroke:0.15px #000;">线宽</div>
<div class="a" style="left:55px;top:179.29999999999995px;width:20px;height:0.8px;background:#383838;"></div>
<div class="t" id="panel11" style="left:76px;top:174.79999999999995px;font-size:8px;line-height:10px;color:#101010;font-family:'Liberation Serif',serif;">ByLayer</div>
<div class="a" style="left:15px;top:185.74999999999994px;width:37.5px;height:12.45px;background:#e2e2e8;"></div>
<div class="a" style="left:15px;top:185.74999999999994px;width:0.8px;height:12.45px;background:#c4c4bc;"></div>
<div class="a" style="left:53px;top:185.74999999999994px;width:57px;height:12.45px;background:#f7f7fb;"></div>
<div class="a" style="left:15px;top:197.19999999999993px;width:95px;height:1px;background:#d9d6c8;"></div>
<div class="a" style="left:52.5px;top:185.74999999999994px;width:0.8px;height:12.45px;background:#c8c8c0;"></div>
<div class="t" id="panel12" style="left:16.5px;top:187.24999999999994px;font-size:8px;line-height:10px;color:#101010;-webkit-text-stroke:0.15px #000;">透明度</div>
<div class="t" id="panel13" style="left:54px;top:187.24999999999994px;font-size:8px;line-height:10px;color:#101010;font-family:'Liberation Serif',serif;-webkit-text-stroke:0.1px #000;">ByLayer</div>
<div class="a" style="left:15px;top:198.19999999999993px;width:37.5px;height:12.45px;background:#e2e2e8;"></div>
<div class="a" style="left:15px;top:198.19999999999993px;width:0.8px;height:12.45px;background:#c4c4bc;"></div>
<div class="a" style="left:53px;top:198.19999999999993px;width:57px;height:12.45px;background:#f7f7fb;"></div>
<div class="a" style="left:15px;top:209.64999999999992px;width:95px;height:1px;background:#d9d6c8;"></div>
<div class="a" style="left:52.5px;top:198.19999999999993px;width:0.8px;height:12.45px;background:#c8c8c0;"></div>
<div class="t" id="panel14" style="left:16.5px;top:199.69999999999993px;font-size:8px;line-height:10px;color:#101010;-webkit-text-stroke:0.15px #000;">厚度</div>
<div class="t" id="panel15" style="left:54px;top:199.69999999999993px;font-size:8px;line-height:10px;color:#101010;font-family:'Liberation Mono',monospace;-webkit-text-stroke:0.1px #000;">0</div>
<div class="a" style="left:5px;top:212.5px;width:105px;height:12.5px;background:#2c3e5a;"></div>
<div class="t" id="panel16" style="left:7px;top:214.0px;font-size:8px;line-height:10px;color:#f0f0f8;font-weight:bold">三维效果</div>
<svg class="a" style="left:104px;top:216.5px" width="5" height="4"><polyline points="0.5,3 2.5,1 4.5,3" fill="none" stroke="#8090a8" stroke-width="0.8"/></svg>
<div class="a" style="left:15px;top:225.0px;width:37.5px;height:12.45px;background:#e2e2e8;"></div>
<div class="a" style="left:15px;top:225.0px;width:0.8px;height:12.45px;background:#c4c4bc;"></div>
<div class="a" style="left:53px;top:225.0px;width:57px;height:12.45px;background:#f7f7fb;"></div>
<div class="a" style="left:15px;top:236.45px;width:95px;height:1px;background:#d9d6c8;"></div>
<div class="a" style="left:52.5px;top:225.0px;width:0.8px;height:12.45px;background:#c8c8c0;"></div>
<div class="t" id="panel17" style="left:16.5px;top:226.5px;font-size:8px;line-height:10px;color:#101010;-webkit-text-stroke:0.15px #000;">材质</div>
<div class="t" id="panel18" style="left:54px;top:226.5px;font-size:8px;line-height:10px;color:#101010;font-family:'Liberation Serif',serif;-webkit-text-stroke:0.1px #000;">ByLayer</div>
<div class="a" style="left:15px;top:237.45px;width:37.5px;height:12.45px;background:#e2e2e8;"></div>
<div class="a" style="left:15px;top:237.45px;width:0.8px;height:12.45px;background:#c4c4bc;"></div>
<div class="a" style="left:53px;top:237.45px;width:57px;height:12.45px;background:#f7f7fb;"></div>
<div class="a" style="left:15px;top:248.89999999999998px;width:95px;height:1px;background:#d9d6c8;"></div>
<div class="a" style="left:52.5px;top:237.45px;width:0.8px;height:12.45px;background:#c8c8c0;"></div>
<div class="t" id="panel19" style="left:16.5px;top:238.95px;font-size:8px;line-height:10px;color:#101010;-webkit-text-stroke:0.15px #000;">阴影显示</div>
<div class="t" id="panel20" style="left:54px;top:238.95px;font-size:8px;line-height:10px;color:#101010;-webkit-text-stroke:0.1px #000;">投射和接收阴影</div>
<div class="a" style="left:5px;top:251px;width:105px;height:12.5px;background:#2c3e5a;"></div>
<div class="t" id="panel21" style="left:7px;top:252.5px;font-size:8px;line-height:10px;color:#f0f0f8;font-weight:bold">打印样式</div>
<svg class="a" style="left:104px;top:255px" width="5" height="4"><polyline points="0.5,3 2.5,1 4.5,3" fill="none" stroke="#8090a8" stroke-width="0.8"/></svg>
<div class="a" style="left:15px;top:263.5px;width:37.5px;height:12.45px;background:#e2e2e8;"></div>
<div class="a" style="left:15px;top:263.5px;width:0.8px;height:12.45px;background:#c4c4bc;"></div>
<div class="a" style="left:53px;top:263.5px;width:57px;height:12.45px;background:#f7f7fb;"></div>
<div class="a" style="left:15px;top:274.95px;width:95px;height:1px;background:#d9d6c8;"></div>
<div class="a" style="left:52.5px;top:263.5px;width:0.8px;height:12.45px;background:#c8c8c0;"></div>
<div class="t" id="panel22" style="left:16.5px;top:265.0px;font-size:8px;line-height:10px;color:#101010;-webkit-text-stroke:0.15px #000;">打印样式</div>
<div class="t" id="panel23" style="left:54px;top:265.0px;font-size:8px;line-height:10px;color:#101010;font-family:'Liberation Serif',serif;-webkit-text-stroke:0.1px #000;">ByColor</div>
<div class="a" style="left:15px;top:275.95px;width:37.5px;height:12.45px;background:#e2e2e8;"></div>
<div class="a" style="left:15px;top:275.95px;width:0.8px;height:12.45px;background:#c4c4bc;"></div>
<div class="a" style="left:53px;top:275.95px;width:57px;height:12.45px;background:#f7f7fb;"></div>
<div class="a" style="left:15px;top:287.4px;width:95px;height:1px;background:#d9d6c8;"></div>
<div class="a" style="left:52.5px;top:275.95px;width:0.8px;height:12.45px;background:#c8c8c0;"></div>
<div class="t" id="panel24" style="left:16.5px;top:277.45px;font-size:8px;line-height:10px;color:#101010;-webkit-text-stroke:0.15px #000;">打印样式表</div>
<div class="t" id="panel25" style="left:54px;top:277.45px;font-size:8px;line-height:10px;color:#101010;font-family:'Liberation Serif',serif;-webkit-text-stroke:0.1px #000;">monochrome.ctb</div>
<div class="a" style="left:15px;top:288.4px;width:37.5px;height:12.45px;background:#e2e2e8;"></div>
<div class="a" style="left:15px;top:288.4px;width:0.8px;height:12.45px;background:#c4c4bc;"></div>
<div class="a" style="left:53px;top:288.4px;width:57px;height:12.45px;background:#f7f7fb;"></div>
<div class="a" style="left:15px;top:299.84999999999997px;width:95px;height:1px;background:#d9d6c8;"></div>
<div class="a" style="left:52.5px;top:288.4px;width:0.8px;height:12.45px;background:#c8c8c0;"></div>
<div class="t" id="panel26" style="left:16.5px;top:289.9px;font-size:8px;line-height:10px;color:#101010;-webkit-text-stroke:0.15px #000;">打印表附...</div>
<div class="t" id="panel27" style="left:54px;top:289.9px;font-size:8px;line-height:10px;color:#101010;-webkit-text-stroke:0.1px #000;">模型</div>
<div class="a" style="left:15px;top:300.84999999999997px;width:37.5px;height:12.45px;background:#e2e2e8;"></div>
<div class="a" style="left:15px;top:300.84999999999997px;width:0.8px;height:12.45px;background:#c4c4bc;"></div>
<div class="a" style="left:53px;top:300.84999999999997px;width:57px;height:12.45px;background:#f7f7fb;"></div>
<div class="a" style="left:15px;top:312.29999999999995px;width:95px;height:1px;background:#d9d6c8;"></div>
<div class="a" style="left:52.5px;top:300.84999999999997px;width:0.8px;height:12.45px;background:#c8c8c0;"></div>
<div class="t" id="panel28" style="left:16.5px;top:302.34999999999997px;font-size:8px;line-height:10px;color:#101010;-webkit-text-stroke:0.15px #000;">打印表类型</div>
<div class="t" id="panel29" style="left:54px;top:302.34999999999997px;font-size:8px;line-height:10px;color:#101010;-webkit-text-stroke:0.1px #000;">颜色相关</div>
<div class="a" style="left:5px;top:315px;width:105px;height:12.5px;background:#2c3e5a;"></div>
<div class="t" id="panel30" style="left:7px;top:316.5px;font-size:8px;line-height:10px;color:#f0f0f8;font-weight:bold">视图</div>
<svg class="a" style="left:104px;top:319px" width="5" height="4"><polyline points="0.5,3 2.5,1 4.5,3" fill="none" stroke="#8090a8" stroke-width="0.8"/></svg>
<div class="a" style="left:15px;top:327.5px;width:37.5px;height:12.45px;background:#e2e2e8;"></div>
<div class="a" style="left:15px;top:327.5px;width:0.8px;height:12.45px;background:#c4c4bc;"></div>
<div class="a" style="left:53px;top:327.5px;width:57px;height:12.45px;background:#f7f7fb;"></div>
<div class="a" style="left:15px;top:338.95px;width:95px;height:1px;background:#d9d6c8;"></div>
<div class="a" style="left:52.5px;top:327.5px;width:0.8px;height:12.45px;background:#c8c8c0;"></div>
<div class="t" id="panel31" style="left:16.5px;top:329.0px;font-size:8px;line-height:10px;color:#101010;-webkit-text-stroke:0.15px #000;">圆心 X 坐标</div>
<div class="t" id="panel32" style="left:54px;top:329.0px;font-size:8px;line-height:10px;color:#101010;font-family:'Liberation Mono',monospace;-webkit-text-stroke:0.1px #000;">69453.8918</div>
<div class="a" style="left:15px;top:339.95px;width:37.5px;height:12.45px;background:#e2e2e8;"></div>
<div class="a" style="left:15px;top:339.95px;width:0.8px;height:12.45px;background:#c4c4bc;"></div>
<div class="a" style="left:53px;top:339.95px;width:57px;height:12.45px;background:#f7f7fb;"></div>
<div class="a" style="left:15px;top:351.4px;width:95px;height:1px;background:#d9d6c8;"></div>
<div class="a" style="left:52.5px;top:339.95px;width:0.8px;height:12.45px;background:#c8c8c0;"></div>
<div class="t" id="panel33" style="left:16.5px;top:341.45px;font-size:8px;line-height:10px;color:#101010;-webkit-text-stroke:0.15px #000;">圆心 Y 坐标</div>
<div class="t" id="panel34" style="left:54px;top:341.45px;font-size:8px;line-height:10px;color:#101010;font-family:'Liberation Mono',monospace;-webkit-text-stroke:0.1px #000;">951.245</div>
<div class="a" style="left:15px;top:352.4px;width:37.5px;height:12.45px;background:#e2e2e8;"></div>
<div class="a" style="left:15px;top:352.4px;width:0.8px;height:12.45px;background:#c4c4bc;"></div>
<div class="a" style="left:53px;top:352.4px;width:57px;height:12.45px;background:#f7f7fb;"></div>
<div class="a" style="left:15px;top:363.84999999999997px;width:95px;height:1px;background:#d9d6c8;"></div>
<div class="a" style="left:52.5px;top:352.4px;width:0.8px;height:12.45px;background:#c8c8c0;"></div>
<div class="t" id="panel35" style="left:16.5px;top:353.9px;font-size:8px;line-height:10px;color:#101010;-webkit-text-stroke:0.15px #000;">圆心 Z 坐标</div>
<div class="t" id="panel36" style="left:54px;top:353.9px;font-size:8px;line-height:10px;color:#101010;font-family:'Liberation Mono',monospace;-webkit-text-stroke:0.1px #000;">0</div>
<div class="a" style="left:15px;top:364.84999999999997px;width:37.5px;height:12.45px;background:#e2e2e8;"></div>
<div class="a" style="left:15px;top:364.84999999999997px;width:0.8px;height:12.45px;background:#c4c4bc;"></div>
<div class="a" style="left:53px;top:364.84999999999997px;width:57px;height:12.45px;background:#f7f7fb;"></div>
<div class="a" style="left:15px;top:376.29999999999995px;width:95px;height:1px;background:#d9d6c8;"></div>
<div class="a" style="left:52.5px;top:364.84999999999997px;width:0.8px;height:12.45px;background:#c8c8c0;"></div>
<div class="t" id="panel37" style="left:16.5px;top:366.34999999999997px;font-size:8px;line-height:10px;color:#101010;-webkit-text-stroke:0.15px #000;">高度</div>
<div class="t" id="panel38" style="left:54px;top:366.34999999999997px;font-size:8px;line-height:10px;color:#101010;font-family:'Liberation Mono',monospace;-webkit-text-stroke:0.1px #000;">5265.5378</div>
<div class="a" style="left:15px;top:377.29999999999995px;width:37.5px;height:12.45px;background:#e2e2e8;"></div>
<div class="a" style="left:15px;top:377.29999999999995px;width:0.8px;height:12.45px;background:#c4c4bc;"></div>
<div class="a" style="left:53px;top:377.29999999999995px;width:57px;height:12.45px;background:#f7f7fb;"></div>
<div class="a" style="left:15px;top:388.74999999999994px;width:95px;height:1px;background:#d9d6c8;"></div>
<div class="a" style="left:52.5px;top:377.29999999999995px;width:0.8px;height:12.45px;background:#c8c8c0;"></div>
<div class="t" id="panel39" style="left:16.5px;top:378.79999999999995px;font-size:8px;line-height:10px;color:#101010;-webkit-text-stroke:0.15px #000;">宽度</div>
<div class="t" id="panel40" style="left:54px;top:378.79999999999995px;font-size:8px;line-height:10px;color:#101010;font-family:'Liberation Mono',monospace;-webkit-text-stroke:0.1px #000;">10626.8126</div>
<div class="a" style="left:5px;top:391px;width:105px;height:12.5px;background:#2c3e5a;"></div>
<div class="t" id="panel41" style="left:7px;top:392.5px;font-size:8px;line-height:10px;color:#f0f0f8;font-weight:bold">其他</div>
<svg class="a" style="left:104px;top:395px" width="5" height="4"><polyline points="0.5,3 2.5,1 4.5,3" fill="none" stroke="#8090a8" stroke-width="0.8"/></svg>
<div class="a" style="left:15px;top:403.5px;width:37.5px;height:12.45px;background:#e2e2e8;"></div>
<div class="a" style="left:15px;top:403.5px;width:0.8px;height:12.45px;background:#c4c4bc;"></div>
<div class="a" style="left:53px;top:403.5px;width:57px;height:12.45px;background:#f7f7fb;"></div>
<div class="a" style="left:15px;top:414.95px;width:95px;height:1px;background:#d9d6c8;"></div>
<div class="a" style="left:52.5px;top:403.5px;width:0.8px;height:12.45px;background:#c8c8c0;"></div>
<div class="t" id="panel42" style="left:16.5px;top:405.0px;font-size:8px;line-height:10px;color:#101010;-webkit-text-stroke:0.15px #000;">注释比例</div>
<div class="t" id="panel43" style="left:54px;top:405.0px;font-size:8px;line-height:10px;color:#101010;font-family:'Liberation Mono',monospace;-webkit-text-stroke:0.1px #000;">1:1</div>
<div class="a" style="left:15px;top:415.95px;width:37.5px;height:12.45px;background:#e2e2e8;"></div>
<div class="a" style="left:15px;top:415.95px;width:0.8px;height:12.45px;background:#c4c4bc;"></div>
<div class="a" style="left:53px;top:415.95px;width:57px;height:12.45px;background:#f7f7fb;"></div>
<div class="a" style="left:15px;top:427.4px;width:95px;height:1px;background:#d9d6c8;"></div>
<div class="a" style="left:52.5px;top:415.95px;width:0.8px;height:12.45px;background:#c8c8c0;"></div>
<div class="t" id="panel44" style="left:16.5px;top:417.45px;font-size:8px;line-height:10px;color:#101010;-webkit-text-stroke:0.15px #000;">打开 UCS...</div>
<div class="t" id="panel45" style="left:54px;top:417.45px;font-size:8px;line-height:10px;color:#101010;-webkit-text-stroke:0.1px #000;">是</div>
<div class="a" style="left:15px;top:428.4px;width:37.5px;height:12.45px;background:#e2e2e8;"></div>
<div class="a" style="left:15px;top:428.4px;width:0.8px;height:12.45px;background:#c4c4bc;"></div>
<div class="a" style="left:53px;top:428.4px;width:57px;height:12.45px;background:#f7f7fb;"></div>
<div class="a" style="left:15px;top:439.84999999999997px;width:95px;height:1px;background:#d9d6c8;"></div>
<div class="a" style="left:52.5px;top:428.4px;width:0.8px;height:12.45px;background:#c8c8c0;"></div>
<div class="t" id="panel46" style="left:16.5px;top:429.9px;font-size:8px;line-height:10px;color:#101010;-webkit-text-stroke:0.15px #000;">在原点显...</div>
<div class="t" id="panel47" style="left:54px;top:429.9px;font-size:8px;line-height:10px;color:#101010;-webkit-text-stroke:0.1px #000;">是</div>
<div class="a" style="left:15px;top:440.84999999999997px;width:37.5px;height:12.45px;background:#e2e2e8;"></div>
<div class="a" style="left:15px;top:440.84999999999997px;width:0.8px;height:12.45px;background:#c4c4bc;"></div>
<div class="a" style="left:53px;top:440.84999999999997px;width:57px;height:12.45px;background:#f7f7fb;"></div>
<div class="a" style="left:15px;top:452.29999999999995px;width:95px;height:1px;background:#d9d6c8;"></div>
<div class="a" style="left:52.5px;top:440.84999999999997px;width:0.8px;height:12.45px;background:#c8c8c0;"></div>
<div class="t" id="panel48" style="left:16.5px;top:442.34999999999997px;font-size:8px;line-height:10px;color:#101010;-webkit-text-stroke:0.15px #000;">每个视口...</div>
<div class="t" id="panel49" style="left:54px;top:442.34999999999997px;font-size:8px;line-height:10px;color:#101010;-webkit-text-stroke:0.1px #000;">是</div>
<div class="a" style="left:15px;top:453.29999999999995px;width:37.5px;height:12.45px;background:#e2e2e8;"></div>
<div class="a" style="left:15px;top:453.29999999999995px;width:0.8px;height:12.45px;background:#c4c4bc;"></div>
<div class="a" style="left:53px;top:453.29999999999995px;width:57px;height:12.45px;background:#e6e6ec;"></div>
<div class="a" style="left:15px;top:464.74999999999994px;width:95px;height:1px;background:#d9d6c8;"></div>
<div class="a" style="left:52.5px;top:453.29999999999995px;width:0.8px;height:12.45px;background:#c8c8c0;"></div>
<div class="t" id="panel50" style="left:16.5px;top:454.79999999999995px;font-size:8px;line-height:10px;color:#101010;-webkit-text-stroke:0.15px #000;">UCS 名称</div>
<div class="t" id="panel51" style="left:54px;top:454.79999999999995px;font-size:8px;line-height:10px;color:#101010;-webkit-text-stroke:0.1px #000;"></div>
<div class="a" style="left:15px;top:465.74999999999994px;width:37.5px;height:12.45px;background:#e2e2e8;"></div>
<div class="a" style="left:15px;top:465.74999999999994px;width:0.8px;height:12.45px;background:#c4c4bc;"></div>
<div class="a" style="left:53px;top:465.74999999999994px;width:57px;height:12.45px;background:#f7f7fb;"></div>
<div class="a" style="left:15px;top:477.19999999999993px;width:95px;height:1px;background:#d9d6c8;"></div>
<div class="a" style="left:52.5px;top:465.74999999999994px;width:0.8px;height:12.45px;background:#c8c8c0;"></div>
<div class="t" id="panel52" style="left:16.5px;top:467.24999999999994px;font-size:8px;line-height:10px;color:#101010;-webkit-text-stroke:0.15px #000;">视觉样式</div>
<div class="t" id="panel53" style="left:54px;top:467.24999999999994px;font-size:8px;line-height:10px;color:#101010;-webkit-text-stroke:0.1px #000;">二维线框</div>
<div class="a" style="left:115px;top:79px;width:2px;height:485px;background:#353b48;"></div>
<div class="a" style="left:117px;top:79px;width:800px;height:14px;background:#b9b9c6;background:linear-gradient(#b4b4be,#bcbcc8 45%,#d0d0de 85%,#e6e6f0)"></div>
<svg class="a" style="left:0;top:0" width="960" height="100"><rect x="117" y="90.5" width="800" height="2.5" fill="#ececf6"/><path d="M140.5 91 v-6 q0 -4 4 -4 h98 v10z" fill="#f6dc86" stroke="#e8d090" stroke-width="0.6"/></svg>
<div class="t" id="doctab1" style="left:144px;top:81.5px;font-size:8px;line-height:10px;color:#101010;"><b>廖记夫妻肺片北泰花园店.dwg</b></div>
<svg class="a" style="left:235px;top:83.5px" width="6" height="6"><path d="M1 1 l4 4 M5 1 l-4 4" stroke="#505050" stroke-width="0.9"/></svg>
<svg class="a" style="left:910px;top:84px" width="6" height="5"><path d="M0.5 1 h5 l-2.5 3z" fill="#404050"/></svg>
<div class="a" style="left:117px;top:85px;width:22px;height:473px;background:#f0f0f6;"></div>
<div class="a" style="left:117px;top:558px;width:22px;height:6px;background:#8a8a90;"></div>
<svg class="a" style="left:0px;top:0px;" width="960" height="640" viewBox="0 0 960 640"><g transform="translate(127,97)"><line x1="-6.5" y1="6.5" x2="5.5" y2="-7.5" stroke="#5a6898" stroke-width="0.9"/><circle cx="-6.5" cy="6.5" r="1.3" fill="#6a80c0"/><circle cx="5.5" cy="-7.5" r="1.3" fill="#6a80c0"/></g><g transform="translate(127,119)"><line x1="-7" y1="7" x2="6" y2="-7.5" stroke="#404a78" stroke-width="0.9"/><circle cx="-7" cy="7" r="1.3" fill="#202840"/><circle cx="6" cy="-7.5" r="1.3" fill="#202840"/><circle cx="-0.5" cy="-0.3" r="1.3" fill="#5a70c0"/></g><g transform="translate(127,141.5)"><path d="M-7 4.5 h6 q5 0 5 -4 q0 -5 -4 -5" fill="none" stroke="#4a5688" stroke-width="1"/><circle cx="-7" cy="4.5" r="1.3" fill="#8090c0"/><circle cx="-1" cy="4.5" r="1.3" fill="#5a70c0"/><circle cx="0" cy="-4.5" r="1.3" fill="#5a70c0"/></g><g transform="translate(127,163.5)"><path d="M0 -8 l7.5 5.5 l-2.8 8.5 h-9.4 l-2.8 -8.5z" fill="#b8c8ee" stroke="#4a5688" stroke-width="0.9"/></g><g transform="translate(127,187)"><rect x="-7" y="-5.5" width="14" height="11" fill="#e2eafb" stroke="#4a5688" stroke-width="0.9"/></g><g transform="translate(127,208)"><path d="M-6.5 7.5 q1 -11 12 -14.5" fill="none" stroke="#4a5688" stroke-width="0.9"/><circle cx="-6.5" cy="7.5" r="1.3" fill="#6a80c0"/><circle cx="-4" cy="-1.5" r="1.3" fill="#6a80c0"/><circle cx="5.5" cy="-7" r="1.3" fill="#6a80c0"/></g><g transform="translate(127,230.6)"><circle r="7.2" fill="#e2eafb" stroke="#4a5688" stroke-width="0.9"/><line x1="0" y1="0" x2="4" y2="-4" stroke="#4a5688" stroke-width="0.8"/><circle cx="0" cy="0" r="1" fill="#5a70c0"/></g><g transform="translate(127,254)"><path d="M-3 -6 q3 -3 6 0 q4 0 3 4 q3 3 0 6 q0 4 -4 3 q-3 3 -6 0 q-4 0 -3 -4 q-3 -3 0 -6 q0 -4 4 -3z" fill="#e2eafb" stroke="#4a5688" stroke-width="0.9"/></g><g transform="translate(127,276.6)"><path d="M-7 4 q2 -6 5 -2 q3 4 5 -2 q1 -3 3 -4" fill="none" stroke="#4a5688" stroke-width="1"/></g><g transform="translate(127,299)"><ellipse rx="7" ry="6.5" fill="#b8c8ee" stroke="#4a5688" stroke-width="0.9"/></g><g transform="translate(127,322.8)"><path d="M-3 6.5 q-5 -2 -4 -7 q2 -6 8 -5 q6 2 5 7 q-1 3 -4 5" fill="none" stroke="#4a5688" stroke-width="1"/><circle cx="-3" cy="6.5" r="1.3" fill="#6a80c0"/></g><g transform="translate(127,345)"><rect x="-6.5" y="-7.5" width="9" height="7" fill="#b8c8ee" stroke="#4a5688" stroke-width="0.8"/><rect x="-7.5" y="-3.5" width="11" height="8" fill="#e2eafb" stroke="#4a5688" stroke-width="0.9"/><path d="M1 -1 l4 4 l-2 3z" fill="#304080"/><rect x="5" y="5" width="3" height="3" fill="#202020"/></g><g transform="translate(127,367)"><rect x="-7.5" y="-6.5" width="11" height="9" fill="#e2eafb" stroke="#4a5688" stroke-width="0.9"/><circle cx="3" cy="3" r="4.2" fill="#b8c8ee" stroke="#4a5688" stroke-width="0.9"/><circle cx="-7.5" cy="2.5" r="1.3" fill="#5a70c0"/></g><g transform="translate(127,389)"><circle r="2.5" fill="none" stroke="#5a6898" stroke-width="0.9"/></g><g transform="translate(127,412)"><rect x="-6.5" y="-6.5" width="13" height="13" fill="#c8d8f4" stroke="#404868" stroke-width="0.9"/><path d="M-6.5 6.5 l13 -13 M-6.5 0 l6.5 -6.5 M0 6.5 l6.5 -6.5" stroke="#7a90d0" stroke-width="0.8"/><path d="M-8 -6.5 h16 M-6.5 -8 v16" stroke="#404868" stroke-width="0.6"/></g><g transform="translate(127,433)"><rect x="-6.5" y="-6.5" width="13" height="13" fill="#f0e6c0" stroke="#404868" stroke-width="0.9"/><path d="M-6.5 6.5 l13 -13 l0 13z" fill="#c8d8f4"/><path d="M-8 -6.5 h16 M-6.5 -8 v16" stroke="#404868" stroke-width="0.6"/></g><g transform="translate(127,457)"><rect x="-2.5" y="-7.5" width="9" height="7" fill="#b8c8ee" stroke="#4a5688" stroke-width="0.9"/><rect x="-6.5" y="-3.5" width="9" height="8" fill="#e2eafb" stroke="#4a5688" stroke-width="0.9"/></g><g transform="translate(127,480)"><path d="M-6.5 -6.5 h8 l5 5 v9 h-13z" fill="#e2eafb" stroke="#4a5688" stroke-width="0.9"/><circle cx="-0.5" cy="2" r="2.5" fill="none" stroke="#4a5688" stroke-width="0.8"/></g><g transform="translate(127,501)"><rect x="-7" y="-6.5" width="14" height="13" fill="#b8c8ee" stroke="#4a5688" stroke-width="0.9"/><rect x="-7" y="-6.5" width="14" height="3" fill="#3a58b0"/><g fill="#3a58b0"><rect x="-5" y="-1" width="2" height="1.5"/><rect x="3" y="-1" width="2" height="1.5"/><rect x="-5" y="3" width="2" height="1.5"/><rect x="3" y="3" width="2" height="1.5"/></g></g><text x="127" y="532" text-anchor="middle" font-family="Liberation Serif" font-size="17" fill="#2a3a78">A</text><g transform="translate(127,547)"><circle cx="-4" cy="-3.5" r="2.8" fill="none" stroke="#4a5688" stroke-width="0.9"/><path d="M0 -4 q4 0 4 4" fill="none" stroke="#2040a0" stroke-width="1.3"/><path d="M2 0 l2 3 l2 -3z" fill="#2040a0"/><ellipse cx="4" cy="6" rx="2.8" ry="3" fill="none" stroke="#3a70c0" stroke-width="0.9"/></g></svg>
<div class="a" style="left:139px;top:93px;width:778px;height:457px;background:#000;"></div>
<svg class="a" style="left:0;top:0" width="960" height="640" viewBox="0 0 960 640">
<g fill="none" stroke="#36a3a6" stroke-width="1">
<rect x="286.5" y="227.5" width="160" height="127"/>
<rect x="503.5" y="148.5" width="152" height="162"/>
<rect x="503.5" y="384.5" width="205" height="96"/>
</g>
<ellipse cx="760.5" cy="305" rx="44.5" ry="53" fill="none" stroke="#2fb4c4" stroke-width="1.8"/><ellipse cx="760.5" cy="305" rx="44.5" ry="53" fill="none" stroke="#60e4ee" stroke-width="1.2" stroke-dasharray="1.5 1.5"/>
<g stroke="#b4aec4" stroke-width="1" fill="none">
<line x1="697" y1="327.5" x2="745" y2="327.5"/>
<line x1="721.5" y1="299" x2="721.5" y2="356" stroke="#a49c9c"/>
<circle cx="721.5" cy="327.5" r="2" stroke="#8a8a8a"/>
</g>
<g stroke="#d6d6cc" stroke-width="1" fill="none">
<line x1="156.5" y1="483" x2="156.5" y2="526"/>
<line x1="160" y1="530.5" x2="196" y2="530.5"/>
<rect x="153.5" y="526.5" width="6" height="8"/>
<polyline points="156,466 160.5,472 165.5,466"/>
<line x1="160.5" y1="472" x2="160.5" y2="477"/>
<line x1="201" y1="520" x2="210" y2="530"/>
<line x1="210" y1="520" x2="201" y2="530"/>
</g>
<polyline points="139,538.5 367.5,538.5 367.5,550" fill="none" stroke="#1f8a4a" stroke-width="1.2"/>
<polyline points="359,541.5 365.5,541.5 365.5,548" fill="none" stroke="#a09cb0" stroke-width="1"/>
</svg>

<div class="a" style="left:139px;top:550px;width:778px;height:13px;background:#acacb6;"></div>
<div class="a" style="left:139px;top:550px;width:778px;height:1px;background:#e4e4ee;"></div>
<div class="a" style="left:139px;top:562px;width:778px;height:1px;background:#dcdce6;"></div>
<div class="a" style="left:139px;top:563px;width:778px;height:1px;background:#303848;"></div>
<svg class="a" style="left:0;top:0" width="960" height="640">
<g fill="#f4f4fa"><path d="M142 556.5 l2.5 -2.5 v5z M145 556.5 l2.5 -2.5 v5z"/><path d="M150.5 556.5 l2.5 -2.5 v5z"/><path d="M158.5 554 l2.5 2.5 l-2.5 2.5z"/><path d="M165.5 554 l2.5 2.5 l-2.5 2.5z M168.5 554 l2.5 2.5 l-2.5 2.5z"/></g>
<path d="M173 551.5 h22 l-3 9 h-16z" fill="#080808"/>
<path d="M195 551.5 h21 l-3 9 h-21z" fill="#e8e8f0" stroke="#9090a0" stroke-width="0.5"/>
<path d="M216 551.5 h22 l-3 9 h-21z" fill="#e8e8f0" stroke="#9090a0" stroke-width="0.5"/>
<path d="M238 551.5 h10 l-3 9 h-10z" fill="#e8e8f0" stroke="#9090a0" stroke-width="0.5"/>
</svg>
<div class="t" id="tabbar1" style="left:177px;top:551px;font-size:8px;line-height:10px;color:#f4f4f4;"><b>模型</b></div>
<div class="t" id="tabbar2" style="left:198px;top:551px;font-size:7px;line-height:9px;color:#606070;">布局1</div>
<div class="t" id="tabbar3" style="left:219px;top:551px;font-size:7px;line-height:9px;color:#606070;">布局2</div>
<div class="t" style="left:242px;top:550.5px;font-size:8px;line-height:10px;color:#606070;">+</div>
<div class="a" style="left:917px;top:79px;width:43px;height:485px;background:#7f7f81;"></div>
<div class="a" style="left:917px;top:79px;width:43px;height:6px;background:#9c9cae;"></div>
<div class="a" style="left:916px;top:85px;width:2px;height:479px;background:#eeeef4;"></div>
<div class="a" style="left:918px;top:85px;width:21px;height:383px;background:#f0f0f6;"></div>
<div class="a" style="left:940px;top:85px;width:20px;height:140px;background:#f0f0f6;"></div>
<svg class="a" style="left:0px;top:0px;" width="960" height="640" viewBox="0 0 960 640"><g transform="translate(928.5,96.5) scale(1.12)"><path d="M-6 3 l7 -8 h6 l-7 8z" fill="#e2eafb" stroke="#404868" stroke-width="0.9"/><path d="M-6 3 h6 v4 h-6z" fill="#e2eafb" stroke="#404868" stroke-width="0.9"/><path d="M0 3 l7 -8 v4 l-7 8z" fill="#c8d8f4" stroke="#404868" stroke-width="0.9"/></g><g transform="translate(928.5,119) scale(1.12)"><circle cx="-4" cy="-4" r="2.8" fill="none" stroke="#4a5688" stroke-width="0.9"/><path d="M1 -7 q4 0 4 5" fill="none" stroke="#2040a0" stroke-width="1.3"/><path d="M3 -2 l2 3 l2 -3z" fill="#2040a0"/><circle cx="2" cy="5" r="3.2" fill="none" stroke="#4a5688" stroke-width="0.9"/><circle cx="4" cy="4" r="3.2" fill="none" stroke="#4a5688" stroke-width="0.9"/></g><g transform="translate(928.5,140) scale(1.12)"><path d="M-1 -7.5 l-6 14.5 h6z" fill="#e2eafb" stroke="#4a5688" stroke-width="0.9"/><path d="M1 -7.5 l6 14.5 h-6z" fill="#c8d8f4" stroke="#4a5688" stroke-width="0.9"/></g><g transform="translate(928.5,164) scale(1.12)"><path d="M-6 6 v-4 h3 v-3 q0 -4 3 -4 q3 0 3 4 v3 h4 v4z" fill="#c8d8f4" stroke="#4a5688" stroke-width="0.9"/></g><g transform="translate(928.5,186.5) scale(1.12)"><rect x="-7" y="-7" width="6.5" height="6.5" fill="#e2eafb" stroke="#4a5688" stroke-width="0.8"/><rect x="0.5" y="-7" width="6.5" height="6.5" fill="#c8d8f4" stroke="#4a5688" stroke-width="0.8"/><rect x="-7" y="0.5" width="6.5" height="6.5" fill="#c8d8f4" stroke="#4a5688" stroke-width="0.8"/><rect x="0.5" y="0.5" width="6.5" height="6.5" fill="#e2eafb" stroke="#4a5688" stroke-width="0.8"/></g><g transform="translate(928.5,209) scale(1.12)"><rect x="-2" y="-2" width="4" height="4" fill="#e2eafb" stroke="#4a5688" stroke-width="0.7"/><path d="M0 -7.5 l-2 2.5 h4z M0 7.5 l-2 -2.5 h4z M-7.5 0 l2.5 -2 v4z M7.5 0 l-2.5 -2 v4z" fill="#1a2a60" stroke="#1a2a60" stroke-width="0.8"/><path d="M0 -5 v2 M0 5 v-2 M-5 0 h2 M5 0 h-2" stroke="#1a2a60" stroke-width="1.2"/></g><g transform="translate(928.5,231.5) scale(1.12)"><circle r="6" fill="none" stroke="#707888" stroke-width="0.9"/><circle cx="-4" cy="-4" r="1.1" fill="#202020"/></g><g transform="translate(928.5,253.7) scale(1.12)"><rect x="-7" y="-7" width="13" height="14" fill="#e2eafb" stroke="#4a5688" stroke-width="0.8"/><rect x="-7" y="-1" width="7" height="8" fill="#f4f6fc" stroke="#4a5688" stroke-width="0.8"/></g><g transform="translate(928.5,276) scale(1.12)"><path d="M-7 -8 h6 v16 h-6z" fill="#e2eafb" stroke="#4a5688" stroke-width="0.8"/><path d="M-1 -8 h2 l6 16 h-8z" fill="#c8e0f0" stroke="#4a5688" stroke-width="0.8"/></g><g transform="translate(928.5,298.75) scale(1.12)"><path d="M-7 0 h4" stroke="#303848" stroke-width="1"/><path d="M2 0 h5" stroke="#f09030" stroke-width="1" stroke-dasharray="1.5 1"/><path d="M-3 6 l4 -12" stroke="#6a78a8" stroke-width="0.9"/></g><g transform="translate(928.5,321) scale(1.12)"><path d="M-7 0 h4" stroke="#303848" stroke-width="1"/><path d="M-2 0 h4" stroke="#f09030" stroke-width="1" stroke-dasharray="1.5 1"/><path d="M3 6 l4 -12" stroke="#6a78a8" stroke-width="0.9"/></g><g transform="translate(928.5,343.75) scale(1.12)"><rect x="-6.5" y="-6" width="13" height="13" fill="#e2eafb" stroke="#6a78a8" stroke-width="0.8"/><circle cx="2" cy="-6" r="1.3" fill="#c8d8f4" stroke="#4a5a90" stroke-width="0.6"/></g><g transform="translate(928.5,367.5) scale(1.12)"><path d="M-1.5 -6 h-5 v13 h13 v-13 h-5" fill="#e2eafb" stroke="#6a78a8" stroke-width="0.8"/><path d="M-2 -6 l1 -1.5 M2 -6 l-1 -1.5" stroke="#6a78a8" stroke-width="0.7"/></g><g transform="translate(928.5,389) scale(1.12)"><path d="M-7 0 h4 l-2 -2 M-3 0 l-2 2 M7 0 h-4 l2 -2 M3 0 l2 2" fill="none" stroke="#404868" stroke-width="0.9"/></g><g transform="translate(928.5,411) scale(1.12)"><path d="M-6 7 v-8 q0 -6 6 -6 h7" fill="none" stroke="#e07050" stroke-width="0.8"/><path d="M-6 7 v-13 M-6 -7 h13" stroke="#6a78a8" stroke-width="0.6"/></g><g transform="translate(928.5,431) scale(1.12)"><path d="M-6 7 v-5 q0 -6 6 -6 h7" fill="none" stroke="#e07050" stroke-width="0.8"/><path d="M-6 7 v-7 M-1 -4 h8" stroke="#6a78a8" stroke-width="0.6"/></g><g transform="translate(928.5,456) scale(1.12)"><path d="M-6 -2 h9 v9 h-9z" fill="#e2eafb" stroke="#4a5688" stroke-width="0.9"/><path d="M-6 -2 l4 -4 h9 l-4 4z M3 -2 l4 -4 v9 l-4 4z" fill="#f4f6fc" stroke="#4a5688" stroke-width="0.9"/></g><g transform="translate(950,95) scale(1.18)"><rect x="-7" y="-7" width="9" height="8" fill="#f4f6fc" stroke="#4a5688" stroke-width="0.8"/><rect x="-4" y="-4" width="10" height="9" fill="#9fb2e4" stroke="#4a5688" stroke-width="0.8"/><rect x="0" y="1" width="8" height="6" fill="#e6eefc" stroke="#4a5688" stroke-width="0.8"/></g><g transform="translate(950,118) scale(1.18)"><rect x="-7" y="-7" width="8" height="7" fill="#f4f6fc" stroke="#4a5688" stroke-width="0.8"/><rect x="-4" y="-3" width="9" height="8" fill="#9fb2e4" stroke="#4a5688" stroke-width="0.8"/><rect x="0" y="1" width="8" height="6" fill="#e6eefc" stroke="#4a5688" stroke-width="0.8"/></g><g transform="translate(950,141.5) scale(1.18)"><rect x="-7" y="-6" width="10" height="9" fill="#9fb2e4" stroke="#4a5688" stroke-width="0.8"/><rect x="-1" y="0" width="8" height="7" fill="#e6eefc" stroke="#4a5688" stroke-width="0.8"/></g><g transform="translate(950,164) scale(1.18)"><rect x="-7" y="-7" width="9" height="9" fill="#c8d4f0" stroke="#4a5688" stroke-width="0.8"/><rect x="-2" y="-2" width="9" height="9" fill="#eef2fc" stroke="#4a5688" stroke-width="0.8"/></g><text x="950" y="189" text-anchor="middle" font-family="Liberation Serif" font-size="7" fill="#303040">ABC</text><rect x="945.5" y="189.5" width="12" height="7" fill="#e6eefc" stroke="#4a5688" stroke-width="0.7"/><path d="M956 196 l2 -3 v3z" fill="#101010"/><g transform="translate(950,213) scale(1.12)"><rect x="-7" y="-7" width="13" height="11" fill="#e6eefc" stroke="#4a5688" stroke-width="0.8"/><path d="M-6 4 v4 M6 4 v4 M-6 7 h12" stroke="#404868" stroke-width="0.7"/></g></svg>
<div class="a" style="left:939px;top:85px;width:1px;height:383px;background:#c8c8d0;"></div>
<div class="a" style="left:940px;top:176px;width:20px;height:1px;background:#c8c8d0;"></div>
<div class="a" style="left:0px;top:564px;width:960px;height:38px;background:#fdfdfd;"></div>
<div class="a" style="left:0px;top:564px;width:960px;height:2px;background:#222a3a;"></div>
<div class="a" style="left:0px;top:564px;width:9px;height:38px;background:#2a3f58;"></div>
<div class="a" style="left:9px;top:589px;width:951px;height:1px;background:#a8a8b0;"></div>
<div class="t" style="left:2.5px;top:567.5px;font-size:9px;line-height:11px;color:#d8dce8;">×</div>
<div class="a" style="left:3px;top:581px;width:3px;height:5px;background:#c8d0e0;"></div>
<div class="t" id="command1" style="left:11px;top:568px;font-size:8px;line-height:10px;color:#101010;"><b>命令:*取消*</b></div>
<div class="t" id="command2" style="left:11px;top:578.5px;font-size:8px;line-height:10px;color:#101010;"><b>命令:指定对角点:</b></div>
<div class="t" id="command3" style="left:11px;top:590.5px;font-size:8px;line-height:10px;color:#101010;"><b>命令:</b></div>
<svg class="a" style="left:950px;top:568px" width="10" height="22"><path d="M1.5 5 l3 -3 l3 3" fill="none" stroke="#404048" stroke-width="1.2"/><path d="M2 14 h5 l-2.5 3z" fill="#404048"/></svg>
<div class="a" style="left:0px;top:602px;width:863px;height:14px;background:#9696a2;"></div>
<div class="a" style="left:863px;top:602px;width:97px;height:14px;background:#fbfbfc;"></div>
<div class="t" id="status1" style="left:1.5px;top:603.5px;font-size:7px;line-height:9px;color:#eeeef4;">72253.9971, 696.8381, 0</div>
<div class="t" id="status2" style="left:131px;top:603.5px;font-size:7px;line-height:9px;color:#f6f6fa;font-weight:bold;">捕捉</div>
<div class="t" id="status3" style="left:146px;top:603.5px;font-size:7px;line-height:9px;color:#f6f6fa;font-weight:bold;">栅格</div>
<div class="a" style="left:160.5px;top:603.5px;width:13px;height:11px;background:#f2dc98;border:1px solid #e8c870"></div>
<div class="t" id="status4" style="left:161.5px;top:603.5px;font-size:7px;line-height:9px;color:#202020;font-weight:bold;">正交</div>
<div class="t" id="status5" style="left:177px;top:603.5px;font-size:7px;line-height:9px;color:#f6f6fa;font-weight:bold;">极轴</div>
<div class="a" style="left:190px;top:603.5px;width:25.5px;height:11px;background:#f2dc98;border:1px solid #e8c870"></div>
<div class="t" id="status6" style="left:191px;top:603.5px;font-size:7px;line-height:9px;color:#202020;font-weight:bold;">对象捕捉</div>
<div class="a" style="left:216.7px;top:603.5px;width:25.8px;height:11px;background:#f2dc98;border:1px solid #e8c870"></div>
<div class="t" id="status7" style="left:217.7px;top:603.5px;font-size:7px;line-height:9px;color:#202020;font-weight:bold;">对象追踪</div>
<div class="t" id="status8" style="left:243.6px;top:603.5px;font-size:7px;line-height:9px;color:#f6f6fa;font-weight:bold;">线宽</div>
<div class="a" style="left:259px;top:603.5px;width:26px;height:11px;background:#f2dc98;border:1px solid #e8c870"></div>
<div class="t" id="status9" style="left:260px;top:603.5px;font-size:7px;line-height:9px;color:#202020;font-weight:bold;">动态输入</div>
<div class="t" id="status10" style="left:286px;top:603.5px;font-size:7px;line-height:9px;color:#f6f6fa;font-weight:bold;">允许/禁止动态UCS</div>
<div class="t" id="status11" style="left:314.7px;top:603.5px;font-size:7px;line-height:9px;color:#f6f6fa;font-weight:bold;">按视对齐视频</div>
<div class="t" id="status12" style="left:347.5px;top:603.5px;font-size:7px;line-height:9px;color:#f6f6fa;font-weight:bold;">自动图层</div>
<div class="t" id="status13" style="left:373.8px;top:603.5px;font-size:7px;line-height:9px;color:#f6f6fa;font-weight:bold;">放大镜</div>
<div class="a" style="left:394.4px;top:603.5px;width:13px;height:11px;background:#f2dc98;border:1px solid #e8c870"></div>
<div class="t" id="status14" style="left:395.4px;top:603.5px;font-size:7px;line-height:9px;color:#202020;font-weight:bold;">模型</div>
<div class="a" style="left:455.4px;top:603.5px;width:25.3px;height:11px;background:#f2dc98;border:1px solid #e8c870"></div>
<div class="t" id="status15" style="left:456.4px;top:603.5px;font-size:7px;line-height:9px;color:#202020;font-weight:bold;">选择循环</div>
<svg class="a" style="left:0;top:0" width="960" height="640">
<path d="M413.5 612.5 l2.5 -6 l2.5 6 M414.5 610.5 h3" fill="none" stroke="#4a60b0" stroke-width="0.8"/><path d="M413 613 h6" stroke="#d0d0e0" stroke-width="0.6"/>
<path d="M438.5 612.5 l2.5 -6 l2.5 6" fill="none" stroke="#4a60b0" stroke-width="0.8"/><path d="M440 609 l3 -3" stroke="#e0e0f0" stroke-width="0.6"/>
<path d="M446.5 612.5 l2.5 -6 l2.5 6" fill="none" stroke="#303848" stroke-width="0.8"/><path d="M445 613 h7" stroke="#e0e0f0" stroke-width="0.6"/>
</svg>
<div class="t" id="status16" style="left:421px;top:604px;font-size:6px;line-height:8px;color:#e0e0ea;">1:1 ▾</div>
<svg class="a" style="left:0;top:0" width="960" height="640">
<circle cx="873" cy="609" r="3.5" fill="none" stroke="#506090" stroke-width="1"/><circle cx="873" cy="609" r="1.5" fill="#8090c0"/>
<rect x="879.5" y="607.5" width="6" height="6" fill="#f0b030" stroke="#806020" stroke-width="0.6"/><path d="M880.5 607.5 v-2 q2 -3 4 0 v2" fill="none" stroke="#606060" stroke-width="0.8"/>
<path d="M890 609 q0 -4 3 -4 q3 0 3 4 l-1.5 2 h-3z" fill="#f8f0b0" stroke="#606070" stroke-width="0.7"/><rect x="891.5" y="611.5" width="3" height="2" fill="#3050a0"/>
<rect x="900.5" y="604.5" width="7" height="7" fill="#d0dcf4" stroke="#5a6aa0" stroke-width="0.7"/><rect x="902.5" y="607.5" width="7" height="6" fill="#e8eefc" stroke="#5a6aa0" stroke-width="0.7"/>
<rect x="911.5" y="605.5" width="7" height="8" fill="#f0f4ff" stroke="#3050a0" stroke-width="0.8"/><rect x="911.5" y="605.5" width="7" height="2" fill="#3050a0"/>
<path d="M922 610 l2 3 l5 -7" fill="none" stroke="#60a030" stroke-width="1.6"/><circle cx="922.5" cy="607" r="2" fill="#f0c020"/>
</svg>
<div class="t" id="status17" style="left:931px;top:604px;font-size:7px;line-height:9px;color:#303040;">GstarCAD</div>
<div class="a" style="left:0px;top:616px;width:960px;height:24px;background:#132b56;"></div>
<div class="a" style="left:152.5px;top:616px;width:81.5px;height:24px;background:#1c4a96;"></div>
<div class="a" style="left:51px;top:638px;width:76.5px;height:2px;background:#d8dce8;"></div>
<div class="a" style="left:152.5px;top:638.5px;width:81.5px;height:1.5px;background:#a8d0f8;"></div>
<div class="a" style="left:236px;top:638px;width:76.5px;height:2px;background:#d8dce8;"></div>
<div class="a" style="left:316px;top:638px;width:74px;height:2px;background:#d8dce8;"></div>
<svg class="a" style="left:0;top:0" width="960" height="640">
<g fill="#f0f0f8"><path d="M7.5 624.8 l3.8 -0.6 v4.1 h-3.8z"/><path d="M12 624.1 l4.5 -0.7 v4.9 h-4.5z"/><path d="M7.5 628.9 h3.8 v4.1 l-3.8 -0.6z"/><path d="M12 628.9 h4.5 v4.9 l-4.5 -0.7z"/></g>
<circle cx="37" cy="626.5" r="3" fill="none" stroke="#e8e8f0" stroke-width="1"/><path d="M35 628.8 l-2.5 3" stroke="#e8e8f0" stroke-width="1.2"/>
<circle cx="59.5" cy="628" r="4.3" fill="#f4f8ff" stroke="#2a8af0" stroke-width="1.6"/><path d="M61 630 l2.5 2" stroke="#2a8af0" stroke-width="1.5"/>
<rect x="137" y="623" width="9" height="10" fill="#001e36" stroke="#31a8ff" stroke-width="0.8"/>
<rect x="160" y="622" width="11" height="12" rx="1" fill="#2a6ad8" stroke="#f0f4ff" stroke-width="1"/><path d="M168 625 h-4 l-1 5 h4 l0.5 -2 h-2" fill="none" stroke="#fff" stroke-width="1.2"/>
<path d="M240 623 l5.5 10 l5.5 -10z" fill="#e02828"/><path d="M243 624 l2.5 5 l2.5 -5" fill="none" stroke="#fff" stroke-width="1"/><rect x="246.5" y="629" width="4" height="4" fill="#4a90e0"/>
<path d="M322.5 623 h5 v11 h-5z" fill="#f0d050"/><path d="M324 624 v9" stroke="#c09020" stroke-width="0.8"/>
</svg>
<div class="t" style="left:141px;top:624.5px;font-size:5px;line-height:7px;color:#31a8ff;">Ps</div>
<div class="t" id="taskbar1" style="left:68px;top:623px;font-size:8px;line-height:10px;color:#f0f0f8;">头条号</div>
<div class="t" id="taskbar2" style="left:173px;top:623px;font-size:8px;line-height:10px;color:#f0f0f8;">浩辰CAD 2019 专...</div>
<div class="t" id="taskbar3" style="left:254px;top:623px;font-size:8px;line-height:10px;color:#f0f0f8;">文字文稿1 - WPS...</div>
<div class="t" id="taskbar4" style="left:334px;top:623px;font-size:8px;line-height:10px;color:#f0f0f8;">全屋定制教数学视频</div>
<div class="t" id="taskbar5" style="left:722px;top:622.5px;font-size:8px;line-height:10px;color:#f0f0f8;">田 中 ♪ °, 简</div>
<svg class="a" style="left:0;top:0" width="960" height="640">
<circle cx="778.5" cy="627.5" r="3.2" fill="none" stroke="#e0e0e8" stroke-width="1"/><circle cx="778.5" cy="627.5" r="1.4" fill="none" stroke="#e0e0e8" stroke-width="0.8"/>
<rect x="797" y="624.5" width="7" height="6.5" fill="#b02828"/><text x="800.5" y="630.5" text-anchor="middle" font-family="Liberation Sans" font-weight="bold" font-size="6" fill="#f0e0e0">W</text>
<path d="M808.5 624 h7 v4 q0 3 -3.5 5 q-3.5 -2 -3.5 -5z" fill="#2a70e0" stroke="#e0ecff" stroke-width="0.7"/>
<circle cx="823.5" cy="628" r="3.3" fill="#f070a0"/><circle cx="823.5" cy="628" r="1.3" fill="#fff"/>
<rect x="833" y="624.5" width="7" height="7" fill="#1a3020"/><path d="M834 629 q3 -4 5 0" fill="none" stroke="#76b900" stroke-width="1"/>
<circle cx="847.5" cy="628" r="4" fill="#e8d030"/><circle cx="847.5" cy="628" r="2" fill="#40a040"/>
<path d="M856 628 l5 -3.5 v7z" fill="#e05030"/>
<circle cx="869.5" cy="627" r="3" fill="#30c040"/><circle cx="872.5" cy="630" r="2.2" fill="#f0f0f0"/>
<path d="M882 632 q3 -7 7 -8 M884 632 q2 -4 5 -5 M886 632 q1.5 -2 3 -2.5" fill="none" stroke="#c0c4d0" stroke-width="0.8"/>
<path d="M891 626.5 h2 l2.5 -2.5 v8 l-2.5 -2.5 h-2z" fill="none" stroke="#d0d4e0" stroke-width="0.8"/><path d="M897 626 l1.5 1.5 l-1.5 1.5 M898 625 q1.5 2.5 0 5" fill="none" stroke="#d0d4e0" stroke-width="0.6"/>
<path d="M940.5 623.5 h8 v7 h-3 l-1.5 2 l-1.5 -2 h-2z" fill="none" stroke="#e0e0e8" stroke-width="0.9"/>
</svg>
<div class="t" id="taskbar6" style="left:905px;top:617.5px;font-size:7px;line-height:9px;color:#e8e8f0;">17:52</div>
<div class="t" id="taskbar7" style="left:903.5px;top:624.5px;font-size:7px;line-height:9px;color:#e8e8f0;">星期日</div>
<div class="t" id="taskbar8" style="left:901px;top:632px;font-size:7px;line-height:9px;color:#e8e8f0;">2021/9/12</div>
<svg class="a" style="left:0;top:0" width="960" height="640">
<rect x="883" y="474" width="40" height="25" rx="12" fill="#20283a" opacity="0.9"/>
<circle cx="893" cy="481.5" r="1.5" fill="#3a8ad0"/><circle cx="892" cy="493" r="1.5" fill="#30a040"/>
<circle cx="929.5" cy="485.5" r="13.5" fill="#363c4c" opacity="0.95"/>
<path d="M929.5 472.5 a13 13 0 0 1 12 8" fill="none" stroke="#30c0a0" stroke-width="1.2"/>
<defs><linearGradient id="gb" x1="0" y1="0" x2="0" y2="1"><stop offset="0" stop-color="#62b0fa"/><stop offset="1" stop-color="#2a6ed8"/></linearGradient></defs><ellipse cx="834" cy="555" rx="11.5" ry="12.5" fill="url(#gb)" stroke="#e8f0ff" stroke-width="1.4"/>
<rect x="889" y="576.5" width="68" height="25" rx="2" fill="#a09f9c" opacity="0.93"/><path d="M951.5 585 l2.5 3 l2.5 -3" fill="none" stroke="#303038" stroke-width="1.2"/>
</svg>
<div class="t" style="left:899px;top:481px;font-size:6px;line-height:8px;color:#c8ccd8;">0<span style="font-size:4px">K/s</span></div>
<div class="t" style="left:894px;top:489px;font-size:6px;line-height:8px;color:#c8ccd8;">0.6<span style="font-size:4px">K/s</span></div>
<div class="t" id="overlay1" style="left:920px;top:477px;font-size:14px;line-height:16px;color:#dde0ea;font-family:'Liberation Sans',sans-serif">17<span style="font-size:6px">%</span></div>
<div class="t" id="overlay2" style="left:825px;top:550.5px;font-size:7px;line-height:9px;color:#b8d8ff;">00:00</div>
<div class="t" id="overlay3" style="left:893px;top:580px;font-size:15px;line-height:17px;color:transparent;letter-spacing:1px;-webkit-text-stroke:0.45px #c8c8d0">GstarCAD</div>
</body></html>
